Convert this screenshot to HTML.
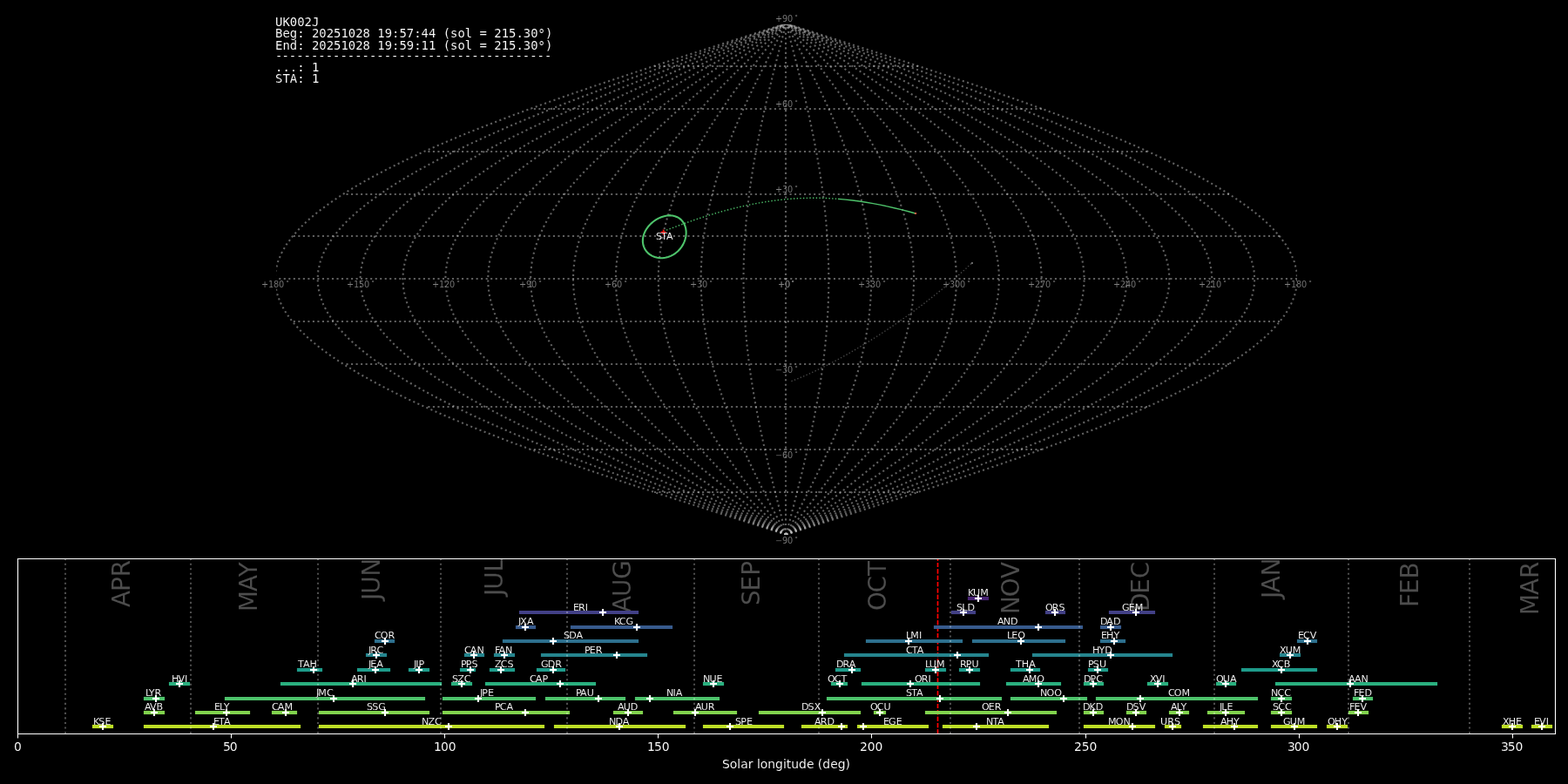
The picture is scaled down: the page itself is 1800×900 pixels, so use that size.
<!DOCTYPE html>
<html lang="en">
<head>
<meta charset="utf-8">
<title>UK002J shower association</title>
<style>
html,body{margin:0;padding:0;background:#000;overflow:hidden}
svg{display:block;position:absolute;left:0;top:0;will-change:transform;filter:opacity(1)}
text{fill:#fff;white-space:pre;font-kerning:none;stroke:#000;stroke-width:.1px}
.g{font:9.7222px "DejaVu Sans","Liberation Sans",sans-serif;fill:#808080}
.o{font-size:6.8056px;stroke:none}
.s{font:11.1111px "DejaVu Sans","Liberation Sans",sans-serif}
.t{font:13.8889px "DejaVu Sans","Liberation Sans",sans-serif}
.m{font:13.8889px "DejaVu Sans Mono","Liberation Mono",monospace}
.M{font:27.7778px "DejaVu Sans","Liberation Sans",sans-serif;fill-opacity:.3}
</style>
</head>
<body>
<svg width="1800" height="900" viewBox="0 0 1800 900">
<rect width="1800" height="900" fill="#000"/>
<defs>
<clipPath id="c1"><rect x="316" y="27" width="1173" height="587"/></clipPath>
<clipPath id="c2"><rect x="20" y="641" width="1765" height="201"/></clipPath>
</defs>
<path d="M413.5 614.5L413.5 619.5" fill="#000000" stroke="#000000" stroke-width="1.1111" stroke-linejoin="round"/>
<path d="M576.5 614.5L576.5 619.5" fill="#000000" stroke="#000000" stroke-width="1.1111" stroke-linejoin="round"/>
<path d="M739.5 614.5L739.5 619.5" fill="#000000" stroke="#000000" stroke-width="1.1111" stroke-linejoin="round"/>
<path d="M902.5 614.5L902.5 619.5" fill="#000000" stroke="#000000" stroke-width="1.1111" stroke-linejoin="round"/>
<path d="M1065.5 614.5L1065.5 619.5" fill="#000000" stroke="#000000" stroke-width="1.1111" stroke-linejoin="round"/>
<path d="M1228.5 614.5L1228.5 619.5" fill="#000000" stroke="#000000" stroke-width="1.1111" stroke-linejoin="round"/>
<path d="M1391.5 614.5L1391.5 619.5" fill="#000000" stroke="#000000" stroke-width="1.1111" stroke-linejoin="round"/>
<path d="M316.5 581.5L311.5 581.5" fill="#000000" stroke="#000000" stroke-width="1.1111" stroke-linejoin="round"/>
<path d="M316.5 516.5L311.5 516.5" fill="#000000" stroke="#000000" stroke-width="1.1111" stroke-linejoin="round"/>
<path d="M316.5 451.5L311.5 451.5" fill="#000000" stroke="#000000" stroke-width="1.1111" stroke-linejoin="round"/>
<path d="M316.5 386.5L311.5 386.5" fill="#000000" stroke="#000000" stroke-width="1.1111" stroke-linejoin="round"/>
<path d="M316.5 320.5L311.5 320.5" fill="#000000" stroke="#000000" stroke-width="1.1111" stroke-linejoin="round"/>
<path d="M316.5 255.5L311.5 255.5" fill="#000000" stroke="#000000" stroke-width="1.1111" stroke-linejoin="round"/>
<path d="M316.5 190.5L311.5 190.5" fill="#000000" stroke="#000000" stroke-width="1.1111" stroke-linejoin="round"/>
<path d="M316.5 125.5L311.5 125.5" fill="#000000" stroke="#000000" stroke-width="1.1111" stroke-linejoin="round"/>
<path d="M316.5 60.5L311.5 60.5" fill="#000000" stroke="#000000" stroke-width="1.1111" stroke-linejoin="round"/>
<path d="M902 614L902 604L902 594L902 584L902 575L902 565L902 555L902 545L902 535L902 526L902 516L902 506L902 496L902 487L902 477L902 467L902 457L902 447L902 438L902 428L902 418L902 408L902 399L902 389L902 379L902 369L902 359L902 350L902 340L902 330L902 320L902 311L902 301L902 291L902 281L902 271L902 262L902 252L902 242L902 232L902 223L902 213L902 203L902 193L902 183L902 174L902 164L902 154L902 144L902 135L902 125L902 115L902 105L902 95L902 86L902 76L902 66L902 56L902 47L902 37L902 27" fill="none" stroke="#c0c0c0" stroke-width="2.0833" stroke-opacity="0.5" stroke-dasharray="2.0833 3.4375" stroke-linejoin="round" clip-path="url(#c1)"/>
<path d="M902.42 613.68L899.861 603.902L897.309 594.123L894.771 584.345L892.255 574.567L889.765 564.788L887.311 555.01L884.898 545.232L882.533 535.453L880.223 525.675L877.973 515.897L875.791 506.118L873.681 496.34L871.65 486.562L869.704 476.783L867.847 467.005L866.085 457.227L864.423 447.448L862.864 437.67L861.415 427.892L860.077 418.113L858.856 408.335L857.754 398.557L856.774 388.778L855.92 379L855.193 369.222L854.595 359.443L854.129 349.665L853.795 339.887L853.594 330.108L853.527 320.33L853.594 310.552L853.795 300.773L854.129 290.995L854.595 281.217L855.193 271.438L855.92 261.66L856.774 251.882L857.754 242.103L858.856 232.325L860.077 222.547L861.415 212.768L862.864 202.99L864.423 193.212L866.085 183.433L867.847 173.655L869.704 163.877L871.65 154.098L873.681 144.32L875.791 134.542L877.973 124.763L880.223 114.985L882.533 105.207L884.898 95.428L887.311 85.65L889.765 75.872L892.255 66.093L894.771 56.315L897.309 46.537L899.861 36.758L902.42 26.98" fill="none" stroke="#c0c0c0" stroke-width="2.0833" stroke-opacity="0.5" stroke-dasharray="2.0833 3.4375" stroke-linejoin="round" clip-path="url(#c1)"/>
<path d="M902.42 613.68L897.302 603.902L892.199 594.123L887.123 584.345L882.089 574.567L877.111 564.788L872.202 555.01L867.376 545.232L862.647 535.453L858.026 525.675L853.527 515.897L849.162 506.118L844.942 496.34L840.881 486.562L836.988 476.783L833.274 467.005L829.75 457.227L826.425 447.448L823.309 437.67L820.409 427.892L817.734 418.113L815.291 408.335L813.087 398.557L811.128 388.778L809.419 379L807.965 369.222L806.77 359.443L805.837 349.665L805.169 339.887L804.767 330.108L804.633 320.33L804.767 310.552L805.169 300.773L805.837 290.995L806.77 281.217L807.965 271.438L809.419 261.66L811.128 251.882L813.087 242.103L815.291 232.325L817.734 222.547L820.409 212.768L823.309 202.99L826.425 193.212L829.75 183.433L833.274 173.655L836.988 163.877L840.881 154.098L844.942 144.32L849.162 134.542L853.527 124.763L858.026 114.985L862.647 105.207L867.376 95.428L872.202 85.65L877.111 75.872L882.089 66.093L887.123 56.315L892.199 46.537L897.302 36.758L902.42 26.98" fill="none" stroke="#c0c0c0" stroke-width="2.0833" stroke-opacity="0.5" stroke-dasharray="2.0833 3.4375" stroke-linejoin="round" clip-path="url(#c1)"/>
<path d="M902.42 613.68L894.743 603.902L887.088 594.123L879.474 584.345L871.924 574.567L864.456 564.788L857.093 555.01L849.855 545.232L842.76 535.453L835.829 525.675L829.08 515.897L822.532 506.118L816.204 496.34L810.111 486.562L804.272 476.783L798.702 467.005L793.416 457.227L788.428 447.448L783.753 437.67L779.404 427.892L775.391 418.113L771.727 408.335L768.421 398.557L765.482 388.778L762.919 379L760.738 369.222L758.945 359.443L757.546 349.665L756.544 339.887L755.941 330.108L755.74 320.33L755.941 310.552L756.544 300.773L757.546 290.995L758.945 281.217L760.738 271.438L762.919 261.66L765.482 251.882L768.421 242.103L771.727 232.325L775.391 222.547L779.404 212.768L783.753 202.99L788.428 193.212L793.416 183.433L798.702 173.655L804.272 163.877L810.111 154.098L816.204 144.32L822.532 134.542L829.08 124.763L835.829 114.985L842.76 105.207L849.855 95.428L857.093 85.65L864.456 75.872L871.924 66.093L879.474 56.315L887.088 46.537L894.743 36.758L902.42 26.98" fill="none" stroke="#c0c0c0" stroke-width="2.0833" stroke-opacity="0.5" stroke-dasharray="2.0833 3.4375" stroke-linejoin="round" clip-path="url(#c1)"/>
<path d="M902.42 613.68L892.184 603.902L881.977 594.123L871.826 584.345L861.758 574.567L851.802 564.788L841.985 555.01L832.333 545.232L822.873 535.453L813.632 525.675L804.633 515.897L795.903 506.118L787.465 496.34L779.342 486.562L771.556 476.783L764.129 467.005L757.081 457.227L750.431 447.448L744.198 437.67L738.398 427.892L733.049 418.113L728.163 408.335L723.755 398.557L719.837 388.778L716.419 379L713.511 369.222L711.12 359.443L709.254 349.665L707.918 339.887L707.115 330.108L706.847 320.33L707.115 310.552L707.918 300.773L709.254 290.995L711.12 281.217L713.511 271.438L716.419 261.66L719.837 251.882L723.755 242.103L728.163 232.325L733.049 222.547L738.398 212.768L744.198 202.99L750.431 193.212L757.081 183.433L764.129 173.655L771.556 163.877L779.342 154.098L787.465 144.32L795.903 134.542L804.633 124.763L813.632 114.985L822.873 105.207L832.333 95.428L841.985 85.65L851.802 75.872L861.758 66.093L871.826 56.315L881.977 46.537L892.184 36.758L902.42 26.98" fill="none" stroke="#c0c0c0" stroke-width="2.0833" stroke-opacity="0.5" stroke-dasharray="2.0833 3.4375" stroke-linejoin="round" clip-path="url(#c1)"/>
<path d="M902.42 613.68L889.626 603.902L876.866 594.123L864.177 584.345L851.593 574.567L839.147 564.788L826.876 555.01L814.811 545.232L802.986 535.453L791.434 525.675L780.187 515.897L769.274 506.118L758.726 496.34L748.572 486.562L738.84 476.783L729.556 467.005L720.746 457.227L712.434 447.448L704.642 437.67L697.393 427.892L690.706 418.113L684.599 408.335L679.089 398.557L674.191 388.778L669.918 379L666.283 369.222L663.296 359.443L660.963 349.665L659.293 339.887L658.288 330.108L657.953 320.33L658.288 310.552L659.293 300.773L660.963 290.995L663.296 281.217L666.283 271.438L669.918 261.66L674.191 251.882L679.089 242.103L684.599 232.325L690.706 222.547L697.393 212.768L704.642 202.99L712.434 193.212L720.746 183.433L729.556 173.655L738.84 163.877L748.572 154.098L758.726 144.32L769.274 134.542L780.187 124.763L791.434 114.985L802.986 105.207L814.811 95.428L826.876 85.65L839.147 75.872L851.593 66.093L864.177 56.315L876.866 46.537L889.626 36.758L902.42 26.98" fill="none" stroke="#c0c0c0" stroke-width="2.0833" stroke-opacity="0.5" stroke-dasharray="2.0833 3.4375" stroke-linejoin="round" clip-path="url(#c1)"/>
<path d="M902.42 613.68L887.067 603.902L871.756 594.123L856.528 584.345L841.427 574.567L826.493 564.788L811.767 555.01L797.289 545.232L783.1 535.453L769.237 525.675L755.74 515.897L742.645 506.118L729.987 496.34L717.803 486.562L706.124 476.783L694.983 467.005L684.411 457.227L674.436 447.448L665.087 437.67L656.388 427.892L648.363 418.113L641.034 408.335L634.422 398.557L628.545 388.778L623.418 379L619.056 369.222L615.471 359.443L612.672 349.665L610.667 339.887L609.462 330.108L609.06 320.33L609.462 310.552L610.667 300.773L612.672 290.995L615.471 281.217L619.056 271.438L623.418 261.66L628.545 251.882L634.422 242.103L641.034 232.325L648.363 222.547L656.388 212.768L665.087 202.99L674.436 193.212L684.411 183.433L694.983 173.655L706.124 163.877L717.803 154.098L729.987 144.32L742.645 134.542L755.74 124.763L769.237 114.985L783.1 105.207L797.289 95.428L811.767 85.65L826.493 75.872L841.427 66.093L856.528 56.315L871.756 46.537L887.067 36.758L902.42 26.98" fill="none" stroke="#c0c0c0" stroke-width="2.0833" stroke-opacity="0.5" stroke-dasharray="2.0833 3.4375" stroke-linejoin="round" clip-path="url(#c1)"/>
<path d="M902.42 613.68L884.508 603.902L866.645 594.123L848.88 584.345L831.262 574.567L813.838 564.788L796.658 555.01L779.767 545.232L763.213 535.453L747.04 525.675L731.293 515.897L716.015 506.118L701.249 496.34L687.033 486.562L673.408 476.783L660.41 467.005L648.076 457.227L636.439 447.448L625.531 437.67L615.382 427.892L606.02 418.113L597.47 408.335L589.756 398.557L582.899 388.778L576.918 379L571.829 369.222L567.646 359.443L564.38 349.665L562.042 339.887L560.636 330.108L560.167 320.33L560.636 310.552L562.042 300.773L564.38 290.995L567.646 281.217L571.829 271.438L576.918 261.66L582.899 251.882L589.756 242.103L597.47 232.325L606.02 222.547L615.382 212.768L625.531 202.99L636.439 193.212L648.076 183.433L660.41 173.655L673.408 163.877L687.033 154.098L701.249 144.32L716.015 134.542L731.293 124.763L747.04 114.985L763.213 105.207L779.767 95.428L796.658 85.65L813.838 75.872L831.262 66.093L848.88 56.315L866.645 46.537L884.508 36.758L902.42 26.98" fill="none" stroke="#c0c0c0" stroke-width="2.0833" stroke-opacity="0.5" stroke-dasharray="2.0833 3.4375" stroke-linejoin="round" clip-path="url(#c1)"/>
<path d="M902.42 613.68L881.949 603.902L861.534 594.123L841.231 584.345L821.096 574.567L801.184 564.788L781.549 555.01L762.246 545.232L743.326 535.453L724.843 525.675L706.847 515.897L689.386 506.118L672.51 496.34L656.263 486.562L640.692 476.783L625.838 467.005L611.741 457.227L598.442 447.448L585.976 437.67L574.377 427.892L563.677 418.113L553.906 408.335L545.09 398.557L537.253 388.778L530.417 379L524.601 369.222L519.821 359.443L516.089 349.665L513.416 339.887L511.809 330.108L511.273 320.33L511.809 310.552L513.416 300.773L516.089 290.995L519.821 281.217L524.601 271.438L530.417 261.66L537.253 251.882L545.09 242.103L553.906 232.325L563.677 222.547L574.377 212.768L585.976 202.99L598.442 193.212L611.741 183.433L625.838 173.655L640.692 163.877L656.263 154.098L672.51 144.32L689.386 134.542L706.847 124.763L724.843 114.985L743.326 105.207L762.246 95.428L781.549 85.65L801.184 75.872L821.096 66.093L841.231 56.315L861.534 46.537L881.949 36.758L902.42 26.98" fill="none" stroke="#c0c0c0" stroke-width="2.0833" stroke-opacity="0.5" stroke-dasharray="2.0833 3.4375" stroke-linejoin="round" clip-path="url(#c1)"/>
<path d="M902.42 613.68L879.39 603.902L856.423 594.123L833.583 584.345L810.931 574.567L788.529 564.788L766.44 555.01L744.724 545.232L723.44 535.453L702.646 525.675L682.4 515.897L662.757 506.118L643.771 496.34L625.494 486.562L607.976 476.783L591.265 467.005L575.407 457.227L560.445 447.448L546.42 437.67L533.371 427.892L521.334 418.113L510.341 408.335L500.423 398.557L491.607 388.778L483.917 379L477.374 369.222L471.996 359.443L467.798 349.665L464.791 339.887L462.983 330.108L462.38 320.33L462.983 310.552L464.791 300.773L467.798 290.995L471.996 281.217L477.374 271.438L483.917 261.66L491.607 251.882L500.423 242.103L510.341 232.325L521.334 222.547L533.371 212.768L546.42 202.99L560.445 193.212L575.407 183.433L591.265 173.655L607.976 163.877L625.494 154.098L643.771 144.32L662.757 134.542L682.4 124.763L702.646 114.985L723.44 105.207L744.724 95.428L766.44 85.65L788.529 75.872L810.931 66.093L833.583 56.315L856.423 46.537L879.39 36.758L902.42 26.98" fill="none" stroke="#c0c0c0" stroke-width="2.0833" stroke-opacity="0.5" stroke-dasharray="2.0833 3.4375" stroke-linejoin="round" clip-path="url(#c1)"/>
<path d="M902.42 613.68L876.831 603.902L851.313 594.123L825.934 584.345L800.765 574.567L775.875 564.788L751.331 555.01L727.202 545.232L703.553 535.453L680.449 525.675L657.953 515.897L636.128 506.118L615.032 496.34L594.724 486.562L575.26 476.783L556.692 467.005L539.072 457.227L522.447 447.448L506.865 437.67L492.366 427.892L478.991 418.113L466.777 408.335L455.757 398.557L445.961 388.778L437.417 379L430.147 369.222L424.171 359.443L419.506 349.665L416.165 339.887L414.157 330.108L413.487 320.33L414.157 310.552L416.165 300.773L419.506 290.995L424.171 281.217L430.147 271.438L437.417 261.66L445.961 251.882L455.757 242.103L466.777 232.325L478.991 222.547L492.366 212.768L506.865 202.99L522.447 193.212L539.072 183.433L556.692 173.655L575.26 163.877L594.724 154.098L615.032 144.32L636.128 134.542L657.953 124.763L680.449 114.985L703.553 105.207L727.202 95.428L751.331 85.65L775.875 75.872L800.765 66.093L825.934 56.315L851.313 46.537L876.831 36.758L902.42 26.98" fill="none" stroke="#c0c0c0" stroke-width="2.0833" stroke-opacity="0.5" stroke-dasharray="2.0833 3.4375" stroke-linejoin="round" clip-path="url(#c1)"/>
<path d="M902.42 613.68L874.272 603.902L846.202 594.123L818.285 584.345L790.6 574.567L763.22 564.788L736.222 555.01L709.68 545.232L683.666 535.453L658.252 525.675L633.507 515.897L609.499 506.118L586.293 496.34L563.955 486.562L542.544 476.783L522.119 467.005L502.737 457.227L484.45 447.448L467.309 437.67L451.361 427.892L436.648 418.113L423.213 408.335L411.091 398.557L400.316 388.778L390.916 379L382.919 369.222L376.346 359.443L371.215 349.665L367.54 339.887L365.33 330.108L364.593 320.33L365.33 310.552L367.54 300.773L371.215 290.995L376.346 281.217L382.919 271.438L390.916 261.66L400.316 251.882L411.091 242.103L423.213 232.325L436.648 222.547L451.361 212.768L467.309 202.99L484.45 193.212L502.737 183.433L522.119 173.655L542.544 163.877L563.955 154.098L586.293 144.32L609.499 134.542L633.507 124.763L658.252 114.985L683.666 105.207L709.68 95.428L736.222 85.65L763.22 75.872L790.6 66.093L818.285 56.315L846.202 46.537L874.272 36.758L902.42 26.98" fill="none" stroke="#c0c0c0" stroke-width="2.0833" stroke-opacity="0.5" stroke-dasharray="2.0833 3.4375" stroke-linejoin="round" clip-path="url(#c1)"/>
<path d="M902.42 613.68L871.713 603.902L841.091 594.123L810.637 584.345L780.434 574.567L750.566 564.788L721.114 555.01L692.158 545.232L663.779 535.453L636.055 525.675L609.06 515.897L582.869 506.118L557.555 496.34L533.185 486.562L509.828 476.783L487.546 467.005L466.402 457.227L446.453 447.448L427.754 437.67L410.355 427.892L394.306 418.113L379.649 408.335L366.425 398.557L354.67 388.778L344.416 379L335.692 369.222L328.521 359.443L322.923 349.665L318.914 339.887L316.504 330.108L315.7 320.33L316.504 310.552L318.914 300.773L322.923 290.995L328.521 281.217L335.692 271.438L344.416 261.66L354.67 251.882L366.425 242.103L379.649 232.325L394.306 222.547L410.355 212.768L427.754 202.99L446.453 193.212L466.402 183.433L487.546 173.655L509.828 163.877L533.185 154.098L557.555 144.32L582.869 134.542L609.06 124.763L636.055 114.985L663.779 105.207L692.158 95.428L721.114 85.65L750.566 75.872L780.434 66.093L810.637 56.315L841.091 46.537L871.713 36.758L902.42 26.98" fill="none" stroke="#c0c0c0" stroke-width="2.0833" stroke-opacity="0.5" stroke-dasharray="2.0833 3.4375" stroke-linejoin="round" clip-path="url(#c1)"/>
<path d="M902.42 613.68L933.127 603.902L963.749 594.123L994.203 584.345L1024.406 574.567L1054.274 564.788L1083.726 555.01L1112.682 545.232L1141.06 535.453L1168.785 525.675L1195.78 515.897L1221.97 506.118L1247.285 496.34L1271.655 486.562L1295.012 476.783L1317.293 467.005L1338.438 457.227L1358.387 447.448L1377.086 437.67L1394.485 427.892L1410.534 418.113L1425.191 408.335L1438.415 398.557L1450.17 388.778L1460.424 379L1469.148 369.222L1476.318 359.443L1481.916 349.665L1485.926 339.887L1488.336 330.108L1489.14 320.33L1488.336 310.552L1485.926 300.773L1481.916 290.995L1476.318 281.217L1469.148 271.438L1460.424 261.66L1450.17 251.882L1438.415 242.103L1425.191 232.325L1410.534 222.547L1394.485 212.768L1377.086 202.99L1358.387 193.212L1338.438 183.433L1317.293 173.655L1295.012 163.877L1271.655 154.098L1247.285 144.32L1221.97 134.542L1195.78 124.763L1168.785 114.985L1141.06 105.207L1112.682 95.428L1083.726 85.65L1054.274 75.872L1024.406 66.093L994.203 56.315L963.749 46.537L933.127 36.758L902.42 26.98" fill="none" stroke="#c0c0c0" stroke-width="2.0833" stroke-opacity="0.5" stroke-dasharray="2.0833 3.4375" stroke-linejoin="round" clip-path="url(#c1)"/>
<path d="M902.42 613.68L930.568 603.902L958.638 594.123L986.555 584.345L1014.24 574.567L1041.62 564.788L1068.618 555.01L1095.16 545.232L1121.174 535.453L1146.588 525.675L1171.333 515.897L1195.341 506.118L1218.547 496.34L1240.885 486.562L1262.296 476.783L1282.721 467.005L1302.103 457.227L1320.39 447.448L1337.531 437.67L1353.479 427.892L1368.192 418.113L1381.627 408.335L1393.749 398.557L1404.524 388.778L1413.924 379L1421.921 369.222L1428.494 359.443L1433.625 349.665L1437.3 339.887L1439.51 330.108L1440.247 320.33L1439.51 310.552L1437.3 300.773L1433.625 290.995L1428.494 281.217L1421.921 271.438L1413.924 261.66L1404.524 251.882L1393.749 242.103L1381.627 232.325L1368.192 222.547L1353.479 212.768L1337.531 202.99L1320.39 193.212L1302.103 183.433L1282.721 173.655L1262.296 163.877L1240.885 154.098L1218.547 144.32L1195.341 134.542L1171.333 124.763L1146.588 114.985L1121.174 105.207L1095.16 95.428L1068.618 85.65L1041.62 75.872L1014.24 66.093L986.555 56.315L958.638 46.537L930.568 36.758L902.42 26.98" fill="none" stroke="#c0c0c0" stroke-width="2.0833" stroke-opacity="0.5" stroke-dasharray="2.0833 3.4375" stroke-linejoin="round" clip-path="url(#c1)"/>
<path d="M902.42 613.68L928.009 603.902L953.527 594.123L978.906 584.345L1004.075 574.567L1028.965 564.788L1053.509 555.01L1077.638 545.232L1101.287 535.453L1124.391 525.675L1146.887 515.897L1168.712 506.118L1189.808 496.34L1210.116 486.562L1229.58 476.783L1248.148 467.005L1265.768 457.227L1282.393 447.448L1297.975 437.67L1312.474 427.892L1325.849 418.113L1338.063 408.335L1349.083 398.557L1358.879 388.778L1367.423 379L1374.693 369.222L1380.669 359.443L1385.334 349.665L1388.675 339.887L1390.683 330.108L1391.353 320.33L1390.683 310.552L1388.675 300.773L1385.334 290.995L1380.669 281.217L1374.693 271.438L1367.423 261.66L1358.879 251.882L1349.083 242.103L1338.063 232.325L1325.849 222.547L1312.474 212.768L1297.975 202.99L1282.393 193.212L1265.768 183.433L1248.148 173.655L1229.58 163.877L1210.116 154.098L1189.808 144.32L1168.712 134.542L1146.887 124.763L1124.391 114.985L1101.287 105.207L1077.638 95.428L1053.509 85.65L1028.965 75.872L1004.075 66.093L978.906 56.315L953.527 46.537L928.009 36.758L902.42 26.98" fill="none" stroke="#c0c0c0" stroke-width="2.0833" stroke-opacity="0.5" stroke-dasharray="2.0833 3.4375" stroke-linejoin="round" clip-path="url(#c1)"/>
<path d="M902.42 613.68L925.45 603.902L948.417 594.123L971.257 584.345L993.909 574.567L1016.311 564.788L1038.4 555.01L1060.116 545.232L1081.4 535.453L1102.194 525.675L1122.44 515.897L1142.083 506.118L1161.069 496.34L1179.346 486.562L1196.864 476.783L1213.575 467.005L1229.433 457.227L1244.395 447.448L1258.42 437.67L1271.469 427.892L1283.506 418.113L1294.499 408.335L1304.417 398.557L1313.233 388.778L1320.923 379L1327.466 369.222L1332.844 359.443L1337.042 349.665L1340.049 339.887L1341.857 330.108L1342.46 320.33L1341.857 310.552L1340.049 300.773L1337.042 290.995L1332.844 281.217L1327.466 271.438L1320.923 261.66L1313.233 251.882L1304.417 242.103L1294.499 232.325L1283.506 222.547L1271.469 212.768L1258.42 202.99L1244.395 193.212L1229.433 183.433L1213.575 173.655L1196.864 163.877L1179.346 154.098L1161.069 144.32L1142.083 134.542L1122.44 124.763L1102.194 114.985L1081.4 105.207L1060.116 95.428L1038.4 85.65L1016.311 75.872L993.909 66.093L971.257 56.315L948.417 46.537L925.45 36.758L902.42 26.98" fill="none" stroke="#c0c0c0" stroke-width="2.0833" stroke-opacity="0.5" stroke-dasharray="2.0833 3.4375" stroke-linejoin="round" clip-path="url(#c1)"/>
<path d="M902.42 613.68L922.891 603.902L943.306 594.123L963.609 584.345L983.744 574.567L1003.656 564.788L1023.291 555.01L1042.594 545.232L1061.514 535.453L1079.997 525.675L1097.993 515.897L1115.454 506.118L1132.33 496.34L1148.577 486.562L1164.148 476.783L1179.002 467.005L1193.099 457.227L1206.398 447.448L1218.864 437.67L1230.463 427.892L1241.163 418.113L1250.934 408.335L1259.75 398.557L1267.587 388.778L1274.423 379L1280.239 369.222L1285.019 359.443L1288.751 349.665L1291.424 339.887L1293.031 330.108L1293.567 320.33L1293.031 310.552L1291.424 300.773L1288.751 290.995L1285.019 281.217L1280.239 271.438L1274.423 261.66L1267.587 251.882L1259.75 242.103L1250.934 232.325L1241.163 222.547L1230.463 212.768L1218.864 202.99L1206.398 193.212L1193.099 183.433L1179.002 173.655L1164.148 163.877L1148.577 154.098L1132.33 144.32L1115.454 134.542L1097.993 124.763L1079.997 114.985L1061.514 105.207L1042.594 95.428L1023.291 85.65L1003.656 75.872L983.744 66.093L963.609 56.315L943.306 46.537L922.891 36.758L902.42 26.98" fill="none" stroke="#c0c0c0" stroke-width="2.0833" stroke-opacity="0.5" stroke-dasharray="2.0833 3.4375" stroke-linejoin="round" clip-path="url(#c1)"/>
<path d="M902.42 613.68L920.332 603.902L938.195 594.123L955.96 584.345L973.578 574.567L991.002 564.788L1008.182 555.01L1025.073 545.232L1041.627 535.453L1057.8 525.675L1073.547 515.897L1088.825 506.118L1103.591 496.34L1117.807 486.562L1131.432 476.783L1144.43 467.005L1156.764 457.227L1168.401 447.448L1179.309 437.67L1189.458 427.892L1198.82 418.113L1207.37 408.335L1215.084 398.557L1221.941 388.778L1227.922 379L1233.011 369.222L1237.194 359.443L1240.46 349.665L1242.798 339.887L1244.204 330.108L1244.673 320.33L1244.204 310.552L1242.798 300.773L1240.46 290.995L1237.194 281.217L1233.011 271.438L1227.922 261.66L1221.941 251.882L1215.084 242.103L1207.37 232.325L1198.82 222.547L1189.458 212.768L1179.309 202.99L1168.401 193.212L1156.764 183.433L1144.43 173.655L1131.432 163.877L1117.807 154.098L1103.591 144.32L1088.825 134.542L1073.547 124.763L1057.8 114.985L1041.627 105.207L1025.073 95.428L1008.182 85.65L991.002 75.872L973.578 66.093L955.96 56.315L938.195 46.537L920.332 36.758L902.42 26.98" fill="none" stroke="#c0c0c0" stroke-width="2.0833" stroke-opacity="0.5" stroke-dasharray="2.0833 3.4375" stroke-linejoin="round" clip-path="url(#c1)"/>
<path d="M902.42 613.68L917.773 603.902L933.084 594.123L948.312 584.345L963.413 574.567L978.347 564.788L993.073 555.01L1007.551 545.232L1021.74 535.453L1035.603 525.675L1049.1 515.897L1062.195 506.118L1074.853 496.34L1087.037 486.562L1098.716 476.783L1109.857 467.005L1120.429 457.227L1130.404 447.448L1139.753 437.67L1148.452 427.892L1156.477 418.113L1163.806 408.335L1170.418 398.557L1176.295 388.778L1181.422 379L1185.784 369.222L1189.369 359.443L1192.168 349.665L1194.173 339.887L1195.378 330.108L1195.78 320.33L1195.378 310.552L1194.173 300.773L1192.168 290.995L1189.369 281.217L1185.784 271.438L1181.422 261.66L1176.295 251.882L1170.418 242.103L1163.806 232.325L1156.477 222.547L1148.452 212.768L1139.753 202.99L1130.404 193.212L1120.429 183.433L1109.857 173.655L1098.716 163.877L1087.037 154.098L1074.853 144.32L1062.195 134.542L1049.1 124.763L1035.603 114.985L1021.74 105.207L1007.551 95.428L993.073 85.65L978.347 75.872L963.413 66.093L948.312 56.315L933.084 46.537L917.773 36.758L902.42 26.98" fill="none" stroke="#c0c0c0" stroke-width="2.0833" stroke-opacity="0.5" stroke-dasharray="2.0833 3.4375" stroke-linejoin="round" clip-path="url(#c1)"/>
<path d="M902.42 613.68L915.214 603.902L927.974 594.123L940.663 584.345L953.247 574.567L965.693 564.788L977.964 555.01L990.029 545.232L1001.854 535.453L1013.406 525.675L1024.653 515.897L1035.566 506.118L1046.114 496.34L1056.268 486.562L1066 476.783L1075.284 467.005L1084.094 457.227L1092.406 447.448L1100.198 437.67L1107.447 427.892L1114.134 418.113L1120.241 408.335L1125.751 398.557L1130.649 388.778L1134.922 379L1138.557 369.222L1141.544 359.443L1143.877 349.665L1145.547 339.887L1146.552 330.108L1146.887 320.33L1146.552 310.552L1145.547 300.773L1143.877 290.995L1141.544 281.217L1138.557 271.438L1134.922 261.66L1130.649 251.882L1125.751 242.103L1120.241 232.325L1114.134 222.547L1107.447 212.768L1100.198 202.99L1092.406 193.212L1084.094 183.433L1075.284 173.655L1066 163.877L1056.268 154.098L1046.114 144.32L1035.566 134.542L1024.653 124.763L1013.406 114.985L1001.854 105.207L990.029 95.428L977.964 85.65L965.693 75.872L953.247 66.093L940.663 56.315L927.974 46.537L915.214 36.758L902.42 26.98" fill="none" stroke="#c0c0c0" stroke-width="2.0833" stroke-opacity="0.5" stroke-dasharray="2.0833 3.4375" stroke-linejoin="round" clip-path="url(#c1)"/>
<path d="M902.42 613.68L912.656 603.902L922.863 594.123L933.014 584.345L943.082 574.567L953.038 564.788L962.855 555.01L972.507 545.232L981.967 535.453L991.208 525.675L1000.207 515.897L1008.937 506.118L1017.375 496.34L1025.498 486.562L1033.284 476.783L1040.711 467.005L1047.759 457.227L1054.409 447.448L1060.642 437.67L1066.442 427.892L1071.791 418.113L1076.677 408.335L1081.085 398.557L1085.003 388.778L1088.421 379L1091.329 369.222L1093.72 359.443L1095.586 349.665L1096.922 339.887L1097.725 330.108L1097.993 320.33L1097.725 310.552L1096.922 300.773L1095.586 290.995L1093.72 281.217L1091.329 271.438L1088.421 261.66L1085.003 251.882L1081.085 242.103L1076.677 232.325L1071.791 222.547L1066.442 212.768L1060.642 202.99L1054.409 193.212L1047.759 183.433L1040.711 173.655L1033.284 163.877L1025.498 154.098L1017.375 144.32L1008.937 134.542L1000.207 124.763L991.208 114.985L981.967 105.207L972.507 95.428L962.855 85.65L953.038 75.872L943.082 66.093L933.014 56.315L922.863 46.537L912.656 36.758L902.42 26.98" fill="none" stroke="#c0c0c0" stroke-width="2.0833" stroke-opacity="0.5" stroke-dasharray="2.0833 3.4375" stroke-linejoin="round" clip-path="url(#c1)"/>
<path d="M902.42 613.68L910.097 603.902L917.752 594.123L925.366 584.345L932.916 574.567L940.384 564.788L947.747 555.01L954.985 545.232L962.08 535.453L969.011 525.675L975.76 515.897L982.308 506.118L988.636 496.34L994.729 486.562L1000.568 476.783L1006.138 467.005L1011.424 457.227L1016.412 447.448L1021.087 437.67L1025.436 427.892L1029.449 418.113L1033.113 408.335L1036.419 398.557L1039.358 388.778L1041.921 379L1044.102 369.222L1045.895 359.443L1047.294 349.665L1048.296 339.887L1048.899 330.108L1049.1 320.33L1048.899 310.552L1048.296 300.773L1047.294 290.995L1045.895 281.217L1044.102 271.438L1041.921 261.66L1039.358 251.882L1036.419 242.103L1033.113 232.325L1029.449 222.547L1025.436 212.768L1021.087 202.99L1016.412 193.212L1011.424 183.433L1006.138 173.655L1000.568 163.877L994.729 154.098L988.636 144.32L982.308 134.542L975.76 124.763L969.011 114.985L962.08 105.207L954.985 95.428L947.747 85.65L940.384 75.872L932.916 66.093L925.366 56.315L917.752 46.537L910.097 36.758L902.42 26.98" fill="none" stroke="#c0c0c0" stroke-width="2.0833" stroke-opacity="0.5" stroke-dasharray="2.0833 3.4375" stroke-linejoin="round" clip-path="url(#c1)"/>
<path d="M902.42 613.68L907.538 603.902L912.641 594.123L917.717 584.345L922.751 574.567L927.729 564.788L932.638 555.01L937.464 545.232L942.193 535.453L946.814 525.675L951.313 515.897L955.678 506.118L959.898 496.34L963.959 486.562L967.852 476.783L971.566 467.005L975.09 457.227L978.415 447.448L981.531 437.67L984.431 427.892L987.106 418.113L989.549 408.335L991.753 398.557L993.712 388.778L995.421 379L996.875 369.222L998.07 359.443L999.003 349.665L999.671 339.887L1000.073 330.108L1000.207 320.33L1000.073 310.552L999.671 300.773L999.003 290.995L998.07 281.217L996.875 271.438L995.421 261.66L993.712 251.882L991.753 242.103L989.549 232.325L987.106 222.547L984.431 212.768L981.531 202.99L978.415 193.212L975.09 183.433L971.566 173.655L967.852 163.877L963.959 154.098L959.898 144.32L955.678 134.542L951.313 124.763L946.814 114.985L942.193 105.207L937.464 95.428L932.638 85.65L927.729 75.872L922.751 66.093L917.717 56.315L912.641 46.537L907.538 36.758L902.42 26.98" fill="none" stroke="#c0c0c0" stroke-width="2.0833" stroke-opacity="0.5" stroke-dasharray="2.0833 3.4375" stroke-linejoin="round" clip-path="url(#c1)"/>
<path d="M902.42 613.68L904.979 603.902L907.531 594.123L910.069 584.345L912.585 574.567L915.075 564.788L917.529 555.01L919.942 545.232L922.307 535.453L924.617 525.675L926.867 515.897L929.049 506.118L931.159 496.34L933.19 486.562L935.136 476.783L936.993 467.005L938.755 457.227L940.417 447.448L941.976 437.67L943.425 427.892L944.763 418.113L945.984 408.335L947.086 398.557L948.066 388.778L948.92 379L949.647 369.222L950.245 359.443L950.711 349.665L951.045 339.887L951.246 330.108L951.313 320.33L951.246 310.552L951.045 300.773L950.711 290.995L950.245 281.217L949.647 271.438L948.92 261.66L948.066 251.882L947.086 242.103L945.984 232.325L944.763 222.547L943.425 212.768L941.976 202.99L940.417 193.212L938.755 183.433L936.993 173.655L935.136 163.877L933.19 154.098L931.159 144.32L929.049 134.542L926.867 124.763L924.617 114.985L922.307 105.207L919.942 95.428L917.529 85.65L915.075 75.872L912.585 66.093L910.069 56.315L907.531 46.537L904.979 36.758L902.42 26.98" fill="none" stroke="#c0c0c0" stroke-width="2.0833" stroke-opacity="0.5" stroke-dasharray="2.0833 3.4375" stroke-linejoin="round" clip-path="url(#c1)"/>
<path d="M902 565L890 565L877 565L864 565L852 565L839 565L826 565L814 565L801 565L789 565L776 565L763 565L751 565" fill="none" stroke="#c0c0c0" stroke-width="2.0833" stroke-opacity="0.5" stroke-dasharray="2.0833 3.4375" stroke-linejoin="round" clip-path="url(#c1)"/>
<path d="M1054 565L1042 565L1029 565L1016 565L1004 565L991 565L978 565L966 565L953 565L940 565L928 565L915 565L902 565" fill="none" stroke="#c0c0c0" stroke-width="2.0833" stroke-opacity="0.5" stroke-dasharray="2.0833 3.4375" stroke-linejoin="round" clip-path="url(#c1)"/>
<path d="M902 516L878 516L854 516L829 516L805 516L780 516L756 516L731 516L707 516L682 516L658 516L634 516L609 516" fill="none" stroke="#c0c0c0" stroke-width="2.0833" stroke-opacity="0.5" stroke-dasharray="2.0833 3.4375" stroke-linejoin="round" clip-path="url(#c1)"/>
<path d="M1196 516L1171 516L1147 516L1122 516L1098 516L1074 516L1049 516L1025 516L1000 516L976 516L951 516L927 516L902 516" fill="none" stroke="#c0c0c0" stroke-width="2.0833" stroke-opacity="0.5" stroke-dasharray="2.0833 3.4375" stroke-linejoin="round" clip-path="url(#c1)"/>
<path d="M902 467L868 467L833 467L799 467L764 467L730 467L695 467L660 467L626 467L591 467L557 467L522 467L488 467" fill="none" stroke="#c0c0c0" stroke-width="2.0833" stroke-opacity="0.5" stroke-dasharray="2.0833 3.4375" stroke-linejoin="round" clip-path="url(#c1)"/>
<path d="M1317 467L1283 467L1248 467L1214 467L1179 467L1144 467L1110 467L1075 467L1041 467L1006 467L972 467L937 467L902 467" fill="none" stroke="#c0c0c0" stroke-width="2.0833" stroke-opacity="0.5" stroke-dasharray="2.0833 3.4375" stroke-linejoin="round" clip-path="url(#c1)"/>
<path d="M902 418L860 418L818 418L775 418L733 418L691 418L648 418L606 418L564 418L521 418L479 418L437 418L394 418" fill="none" stroke="#c0c0c0" stroke-width="2.0833" stroke-opacity="0.5" stroke-dasharray="2.0833 3.4375" stroke-linejoin="round" clip-path="url(#c1)"/>
<path d="M1411 418L1368 418L1326 418L1284 418L1241 418L1199 418L1156 418L1114 418L1072 418L1029 418L987 418L945 418L902 418" fill="none" stroke="#c0c0c0" stroke-width="2.0833" stroke-opacity="0.5" stroke-dasharray="2.0833 3.4375" stroke-linejoin="round" clip-path="url(#c1)"/>
<path d="M902 369L855 369L808 369L761 369L714 369L666 369L619 369L572 369L525 369L477 369L430 369L383 369L336 369" fill="none" stroke="#c0c0c0" stroke-width="2.0833" stroke-opacity="0.5" stroke-dasharray="2.0833 3.4375" stroke-linejoin="round" clip-path="url(#c1)"/>
<path d="M1469 369L1422 369L1375 369L1327 369L1280 369L1233 369L1186 369L1139 369L1091 369L1044 369L997 369L950 369L902 369" fill="none" stroke="#c0c0c0" stroke-width="2.0833" stroke-opacity="0.5" stroke-dasharray="2.0833 3.4375" stroke-linejoin="round" clip-path="url(#c1)"/>
<path d="M902 320L854 320L805 320L756 320L707 320L658 320L609 320L560 320L511 320L462 320L413 320L365 320L316 320" fill="none" stroke="#c0c0c0" stroke-width="2.0833" stroke-opacity="0.5" stroke-dasharray="2.0833 3.4375" stroke-linejoin="round" clip-path="url(#c1)"/>
<path d="M1489 320L1440 320L1391 320L1342 320L1294 320L1245 320L1196 320L1147 320L1098 320L1049 320L1000 320L951 320L902 320" fill="none" stroke="#c0c0c0" stroke-width="2.0833" stroke-opacity="0.5" stroke-dasharray="2.0833 3.4375" stroke-linejoin="round" clip-path="url(#c1)"/>
<path d="M902 271L855 271L808 271L761 271L714 271L666 271L619 271L572 271L525 271L477 271L430 271L383 271L336 271" fill="none" stroke="#c0c0c0" stroke-width="2.0833" stroke-opacity="0.5" stroke-dasharray="2.0833 3.4375" stroke-linejoin="round" clip-path="url(#c1)"/>
<path d="M1469 271L1422 271L1375 271L1327 271L1280 271L1233 271L1186 271L1139 271L1091 271L1044 271L997 271L950 271L902 271" fill="none" stroke="#c0c0c0" stroke-width="2.0833" stroke-opacity="0.5" stroke-dasharray="2.0833 3.4375" stroke-linejoin="round" clip-path="url(#c1)"/>
<path d="M902 223L860 223L818 223L775 223L733 223L691 223L648 223L606 223L564 223L521 223L479 223L437 223L394 223" fill="none" stroke="#c0c0c0" stroke-width="2.0833" stroke-opacity="0.5" stroke-dasharray="2.0833 3.4375" stroke-linejoin="round" clip-path="url(#c1)"/>
<path d="M1411 223L1368 223L1326 223L1284 223L1241 223L1199 223L1156 223L1114 223L1072 223L1029 223L987 223L945 223L902 223" fill="none" stroke="#c0c0c0" stroke-width="2.0833" stroke-opacity="0.5" stroke-dasharray="2.0833 3.4375" stroke-linejoin="round" clip-path="url(#c1)"/>
<path d="M902 174L868 174L833 174L799 174L764 174L730 174L695 174L660 174L626 174L591 174L557 174L522 174L488 174" fill="none" stroke="#c0c0c0" stroke-width="2.0833" stroke-opacity="0.5" stroke-dasharray="2.0833 3.4375" stroke-linejoin="round" clip-path="url(#c1)"/>
<path d="M1317 174L1283 174L1248 174L1214 174L1179 174L1144 174L1110 174L1075 174L1041 174L1006 174L972 174L937 174L902 174" fill="none" stroke="#c0c0c0" stroke-width="2.0833" stroke-opacity="0.5" stroke-dasharray="2.0833 3.4375" stroke-linejoin="round" clip-path="url(#c1)"/>
<path d="M902 125L878 125L854 125L829 125L805 125L780 125L756 125L731 125L707 125L682 125L658 125L634 125L609 125" fill="none" stroke="#c0c0c0" stroke-width="2.0833" stroke-opacity="0.5" stroke-dasharray="2.0833 3.4375" stroke-linejoin="round" clip-path="url(#c1)"/>
<path d="M1196 125L1171 125L1147 125L1122 125L1098 125L1074 125L1049 125L1025 125L1000 125L976 125L951 125L927 125L902 125" fill="none" stroke="#c0c0c0" stroke-width="2.0833" stroke-opacity="0.5" stroke-dasharray="2.0833 3.4375" stroke-linejoin="round" clip-path="url(#c1)"/>
<path d="M902 76L890 76L877 76L864 76L852 76L839 76L826 76L814 76L801 76L789 76L776 76L763 76L751 76" fill="none" stroke="#c0c0c0" stroke-width="2.0833" stroke-opacity="0.5" stroke-dasharray="2.0833 3.4375" stroke-linejoin="round" clip-path="url(#c1)"/>
<path d="M1054 76L1042 76L1029 76L1016 76L1004 76L991 76L978 76L966 76L953 76L940 76L928 76L915 76L902 76" fill="none" stroke="#c0c0c0" stroke-width="2.0833" stroke-opacity="0.5" stroke-dasharray="2.0833 3.4375" stroke-linejoin="round" clip-path="url(#c1)"/>
<path d="M761.609 265.558L763.647 264.756L765.687 263.961L767.728 263.171L769.771 262.387L771.814 261.609L773.858 260.838L775.903 260.072L777.948 259.313L779.994 258.56L782.041 257.813L784.088 257.073L786.135 256.34L788.183 255.613L790.231 254.894L792.279 254.181L794.327 253.476L796.374 252.778L798.422 252.087L800.47 251.403L802.517 250.727L804.565 250.059L806.611 249.398L808.658 248.745L810.704 248.1L812.749 247.463L814.794 246.834L816.838 246.213L818.882 245.601L820.924 244.997L822.966 244.402L825.008 243.815L827.048 243.237L829.088 242.668L831.127 242.107L833.164 241.556L835.201 241.014L837.237 240.481L839.272 239.957L841.307 239.443L843.34 238.938L845.372 238.443L847.403 237.957L849.433 237.481L851.462 237.015L853.49 236.559L855.517 236.113L857.544 235.677L859.569 235.251L861.593 234.835L863.617 234.43L865.639 234.035L867.661 233.651L869.682 233.277L871.702 232.914L873.721 232.562L875.739 232.22L877.757 231.889L879.774 231.569L881.791 231.261L883.806 230.963L885.822 230.676L887.837 230.401L889.851 230.136L891.865 229.883L893.879 229.642L895.893 229.412L897.906 229.193L899.919 228.985L901.932 228.79L903.945 228.605L905.958 228.433L907.972 228.272L909.985 228.123L911.999 227.985L914.013 227.859L916.027 227.745L918.042 227.643L920.057 227.553L922.073 227.474L924.09 227.408L926.107 227.353L928.125 227.31L930.145 227.279L932.165 227.26L934.186 227.253L936.208 227.257L938.231 227.274L940.256 227.302L942.282 227.343L944.309 227.395L946.338 227.459L948.368 227.535L950.4 227.623L952.433 227.723L954.469 227.835L956.506 227.958L958.544 228.093L960.585 228.24L962.627 228.398" fill="none" stroke="#4ec36b" stroke-width="1.3889" stroke-dasharray="1.3889 2.2917" stroke-linejoin="round" clip-path="url(#c1)"/>
<path d="M758.5 266.5L764.5 266.5M761.5 269.5L761.5 263.5" fill="#ff0000" stroke="#ff0000" stroke-width="1.3889" stroke-linejoin="round" clip-path="url(#c1)"/>
<path d="M908.412 437.599L910.659 436.737L912.906 435.856L915.154 434.957L917.402 434.039L919.651 433.102L921.901 432.149L924.151 431.178L926.402 430.189L928.654 429.184L930.907 428.163L933.16 427.125L935.414 426.072L937.669 425.003L939.924 423.919L942.18 422.82L944.436 421.706L946.693 420.578L948.95 419.436L951.208 418.281L953.465 417.112L955.723 415.929L957.98 414.734L960.238 413.527L962.494 412.307L964.751 411.075L967.007 409.831L969.261 408.576L971.515 407.31L973.768 406.032L976.019 404.744L978.269 403.446L980.517 402.137L982.764 400.819L985.008 399.49L987.249 398.153L989.489 396.806L991.725 395.45L993.958 394.085L996.189 392.712L998.416 391.331L1000.639 389.941L1002.858 388.544L1005.074 387.139L1007.285 385.727L1009.491 384.307L1011.693 382.881L1013.89 381.448L1016.081 380.008L1018.267 378.561L1020.447 377.109L1022.621 375.651L1024.789 374.186L1026.951 372.717L1029.106 371.241L1031.253 369.761L1033.394 368.275L1035.527 366.785L1037.653 365.29L1039.771 363.79L1041.88 362.286L1043.981 360.778L1046.074 359.266L1048.158 357.749L1050.233 356.23L1052.298 354.706L1054.354 353.18L1056.401 351.65L1058.437 350.117L1060.463 348.582L1062.479 347.043L1064.484 345.502L1066.479 343.959L1068.462 342.413L1070.435 340.866L1072.396 339.316L1074.345 337.765L1076.283 336.211L1078.209 334.657L1080.123 333.101L1082.024 331.544L1083.913 329.986L1085.79 328.427L1087.653 326.867L1089.504 325.306L1091.342 323.746L1093.167 322.184L1094.978 320.623L1096.776 319.062L1098.56 317.5L1100.33 315.939L1102.087 314.379L1103.83 312.819L1105.558 311.259L1107.273 309.701L1108.973 308.143L1110.659 306.587L1112.331 305.032L1113.989 303.478L1115.632 301.926" fill="none" stroke="#666666" stroke-width="1.3889" stroke-opacity="0.7" stroke-dasharray="1.3889 2.2917" stroke-linejoin="round" clip-path="url(#c1)"/>
<path d="M768.84 247.354L765.661 247.563L762.411 248.187L759.147 249.212L755.926 250.621L752.809 252.386L749.854 254.476L747.119 256.852L744.659 259.471L742.521 262.289L740.749 265.257L739.378 268.326L738.432 271.443L737.929 274.56L737.876 277.626L738.271 280.592L739.1 283.411L740.345 286.04L741.976 288.438L743.959 290.567L746.253 292.394L748.812 293.891L751.589 295.035L754.533 295.808L757.592 296.197L760.716 296.197L763.853 295.808L766.956 295.035L769.977 293.891L772.873 292.394L775.601 290.567L778.126 288.438L780.411 286.04L782.426 283.411L784.145 280.592L785.544 277.626L786.604 274.56L787.31 271.443L787.652 268.326L787.622 265.257L787.22 262.289L786.447 259.471L785.311 256.852L783.824 254.476L782.003 252.386L779.869 250.621L777.451 249.212L774.78 248.187L771.896 247.563L768.84 247.354" fill="none" stroke="#4ec36b" stroke-width="2.0833" stroke-linecap="square" stroke-linejoin="round" clip-path="url(#c1)"/>
<path d="M316.5 614.5L316.5 27.5" fill="none" stroke="#000000" stroke-width="1.1111" stroke-linecap="square"/>
<path d="M1489.5 614.5L1489.5 27.5" fill="none" stroke="#000000" stroke-width="1.1111" stroke-linecap="square"/>
<path d="M316.5 614.5L1489.5 614.5" fill="none" stroke="#000000" stroke-width="1.1111" stroke-linecap="square"/>
<path d="M316.5 27.5L1489.5 27.5" fill="none" stroke="#000000" stroke-width="1.1111" stroke-linecap="square"/>
<text class="g" x="890 898 904" y="624">−90<tspan class="o" x="912" y="619">∘</tspan></text>
<text class="g" x="890 898 904" y="526">−60<tspan class="o" x="912" y="521">∘</tspan></text>
<text class="g" x="890 898 904" y="428">−30<tspan class="o" x="912" y="423">∘</tspan></text>
<text class="g" x="893 901" y="330">+0<tspan class="o" x="908" y="325">∘</tspan></text>
<text class="g" x="890 898 904" y="221">+30<tspan class="o" x="912" y="216">∘</tspan></text>
<text class="g" x="890 898 904" y="123">+60<tspan class="o" x="912" y="118">∘</tspan></text>
<text class="g" x="890 898 904" y="25">+90<tspan class="o" x="912" y="20">∘</tspan></text>
<text class="g" x="893 901" y="330">+0<tspan class="o" x="908" y="325">∘</tspan></text>
<text class="g" x="792 800 806" y="330">+30<tspan class="o" x="814" y="325">∘</tspan></text>
<text class="g" x="694 702 708" y="330">+60<tspan class="o" x="716" y="325">∘</tspan></text>
<text class="g" x="596 604 610" y="330">+90<tspan class="o" x="618" y="325">∘</tspan></text>
<text class="g" x="496 504 510 516" y="330">+120<tspan class="o" x="524" y="325">∘</tspan></text>
<text class="g" x="398 406 412 418" y="330">+150<tspan class="o" x="426" y="325">∘</tspan></text>
<text class="g" x="300 308 314 320" y="330">+180<tspan class="o" x="328" y="325">∘</tspan></text>
<text class="g" x="1474 1482 1488 1494" y="330">+180<tspan class="o" x="1502" y="325">∘</tspan></text>
<text class="g" x="1376 1384 1390 1396" y="330">+210<tspan class="o" x="1404" y="325">∘</tspan></text>
<text class="g" x="1278 1286 1292 1298" y="330">+240<tspan class="o" x="1306" y="325">∘</tspan></text>
<text class="g" x="1180 1188 1194 1200" y="330">+270<tspan class="o" x="1208" y="325">∘</tspan></text>
<text class="g" x="1082 1090 1096 1102" y="330">+300<tspan class="o" x="1110" y="325">∘</tspan></text>
<text class="g" x="985 993 999 1005" y="330">+330<tspan class="o" x="1013" y="325">∘</tspan></text>
<text class="m" x="316 324.375 332.75 341.125 349.5 357.875" y="30">UK002J</text>
<text class="m" x="316 324.375 332.75 341.125 349.5 357.875 366.25 374.625 383 391.375 399.75 408.125 416.5 424.875 433.25 441.625 450 458.375 466.75 475.125 483.5 491.875 500.25 508.625 517 525.375 533.75 542.125 550.5 558.875 567.25 575.625 584 592.375 600.75 609.125 617.5 625.875" y="43 43 43 43 43 43 43 43 43 43 43 43 43 43 43 43 43 43 43 43 43 43 43 43 43 43 43 43 43 43 43 43 43 43 43 43 44 43" xml:space="preserve">Beg: 20251028 19:57:44 (sol = 215.30°)</text>
<text class="m" x="316 324.375 332.75 341.125 349.5 357.875 366.25 374.625 383 391.375 399.75 408.125 416.5 424.875 433.25 441.625 450 458.375 466.75 475.125 483.5 491.875 500.25 508.625 517 525.375 533.75 542.125 550.5 558.875 567.25 575.625 584 592.375 600.75 609.125 617.5 625.875" y="57 57 57 57 57 57 57 57 57 57 57 57 57 57 57 57 57 57 57 57 57 57 57 57 57 57 57 57 57 57 57 57 57 57 57 57 58 57" xml:space="preserve">End: 20251028 19:59:11 (sol = 215.30°)</text>
<text class="m" x="316 323.375 331.75 340.125 348.5 356.875 365.25 373.625 382 390.375 398.75 407.125 415.5 423.875 432.25 440.625 449 457.375 465.75 474.125 482.5 490.875 499.25 507.625 516 524.375 532.75 541.125 549.5 557.875 566.25 574.625 583 591.375 599.75 608.125 616.5 624.875" y="69">--------------------------------------</text>
<text class="m" x="316 324.375 332.75 341.125 349.5 357.875" y="82" xml:space="preserve">...: 1</text>
<text class="m" x="316 324.375 332.75 341.125 349.5 357.875" y="95" xml:space="preserve">STA: 1</text>
<path d="M962.627 228.398L970.494 229.115L978.392 230.002L986.323 231.056L994.29 232.274L1002.292 233.652L1010.33 235.186L1018.403 236.871L1026.509 238.704L1034.646 240.678L1042.811 242.789L1051.001 245.031" fill="none" stroke="#4ec36b" stroke-width="1.3889" stroke-linecap="square" stroke-linejoin="round" clip-path="url(#c1)"/>
<path d="M1115.76 301.805L1115.503 302.048L1115.247 302.291" fill="none" stroke="#666666" stroke-width="1.3889" stroke-linecap="square" stroke-linejoin="round" clip-path="url(#c1)"/>
<path d="M1050 246L1052 246L1052 244L1050 244Z" fill="#ff6347" clip-path="url(#c1)"/>
<path d="M1115 303L1117 303L1117 301L1115 301Z" fill="#666666" clip-path="url(#c1)"/>
<text class="s" x="753 759.125 765" y="275">STA</text>
<text class="M" transform="translate(149 697) rotate(-90)" x="0 18 34.75">APR</text>
<text class="M" transform="translate(295 700) rotate(-90)" x="-2 21 37.875">MAY</text>
<text class="M" transform="translate(436 691) rotate(-90)" x="2 9.25 29.5">JUN</text>
<text class="M" transform="translate(577 686) rotate(-90)" x="2 9.25 29.5">JUL</text>
<text class="M" transform="translate(724 703) rotate(-90)" x="0 18 38.25">AUG</text>
<text class="M" transform="translate(872 694) rotate(-90)" x="-1 15.625 33.25">SEP</text>
<text class="M" transform="translate(1017 700) rotate(-90)" x="-1 19.75 39.125">OCT</text>
<text class="M" transform="translate(1170 703) rotate(-90)" x="-2 17.75 39">NOV</text>
<text class="M" transform="translate(1319 700) rotate(-90)" x="-2 18.375 36">DEC</text>
<text class="M" transform="translate(1469 689) rotate(-90)" x="2 8.75 27.75">JAN</text>
<text class="M" transform="translate(1628 695) rotate(-90)" x="-2 13 30.625">FEB</text>
<text class="M" transform="translate(1766 704) rotate(-90)" x="-2 21 40">MAR</text>
<path d="M20.5 842.5L20.5 847.5" fill="#ffffff" stroke="#ffffff" stroke-width="1.1111" stroke-linejoin="round"/>
<text class="t" x="16" y="862">0</text>
<path d="M265.5 842.5L265.5 847.5" fill="#ffffff" stroke="#ffffff" stroke-width="1.1111" stroke-linejoin="round"/>
<text class="t" x="256 263.75" y="862">50</text>
<path d="M510.5 842.5L510.5 847.5" fill="#ffffff" stroke="#ffffff" stroke-width="1.1111" stroke-linejoin="round"/>
<text class="t" x="498 505.875 514.625" y="862">100</text>
<path d="M755.5 842.5L755.5 847.5" fill="#ffffff" stroke="#ffffff" stroke-width="1.1111" stroke-linejoin="round"/>
<text class="t" x="743 750.875 759.625" y="862">150</text>
<path d="M1000.5 842.5L1000.5 847.5" fill="#ffffff" stroke="#ffffff" stroke-width="1.1111" stroke-linejoin="round"/>
<text class="t" x="987 995.75 1004.5" y="862">200</text>
<path d="M1246.5 842.5L1246.5 847.5" fill="#ffffff" stroke="#ffffff" stroke-width="1.1111" stroke-linejoin="round"/>
<text class="t" x="1233 1241.75 1250.5" y="862">250</text>
<path d="M1491.5 842.5L1491.5 847.5" fill="#ffffff" stroke="#ffffff" stroke-width="1.1111" stroke-linejoin="round"/>
<text class="t" x="1478 1485.75 1494.5" y="862">300</text>
<path d="M1736.5 842.5L1736.5 847.5" fill="#ffffff" stroke="#ffffff" stroke-width="1.1111" stroke-linejoin="round"/>
<text class="t" x="1723 1730.75 1739.5" y="862">350</text>
<text class="t" x="829 837.75 846.25 850.125 858.75 864.5 868.875 872.75 881.25 890 898.875 902.75 908.25 917 925.875 934.375 938.75 944.25 953.125 961.625 970.5" y="882" xml:space="preserve">Solar longitude (deg)</text>
<path d="M1076.5 842.5L1076.5 792.5L1076.5 741.5L1076.5 691.5L1076.5 641.5" fill="none" stroke="#ff0000" stroke-width="1.3889" stroke-dasharray="5.1389 2.2222" stroke-linejoin="round" clip-path="url(#c2)"/>
<path d="M1076.5 842.5L1076.5 792.5L1076.5 741.5L1076.5 691.5L1076.5 641.5" fill="none" stroke="#ff0000" stroke-width="1.3889" stroke-dasharray="5.1389 2.2222" stroke-linejoin="round" clip-path="url(#c2)"/>
<path d="M20.5 842.5L20.5 641.5" fill="none" stroke="#ffffff" stroke-width="1.1111" stroke-linecap="square"/>
<path d="M1785.5 842.5L1785.5 641.5" fill="none" stroke="#ffffff" stroke-width="1.1111" stroke-linecap="square"/>
<path d="M20.5 842.5L1785.5 842.5" fill="none" stroke="#ffffff" stroke-width="1.1111" stroke-linecap="square"/>
<path d="M20.5 641.5L1785.5 641.5" fill="none" stroke="#ffffff" stroke-width="1.1111" stroke-linecap="square"/>
<path d="M108 834L128 834" fill="none" stroke="#bddf26" stroke-width="4.1667" stroke-linecap="square" stroke-linejoin="round" clip-path="url(#c2)"/>
<text class="s" x="107 113.25 120.375" y="832">KSE</text>
<path d="M167 834L343 834" fill="none" stroke="#bddf26" stroke-width="4.1667" stroke-linecap="square" stroke-linejoin="round" clip-path="url(#c2)"/>
<text class="s" x="245 251 256.875" y="832">ETA</text>
<path d="M368 834L623 834" fill="none" stroke="#bddf26" stroke-width="4.1667" stroke-linecap="square" stroke-linejoin="round" clip-path="url(#c2)"/>
<text class="s" x="484 491.375 499" y="832">NZC</text>
<path d="M638 834L785 834" fill="none" stroke="#bddf26" stroke-width="4.1667" stroke-linecap="square" stroke-linejoin="round" clip-path="url(#c2)"/>
<text class="s" x="699 706.375 714.625" y="832">NDA</text>
<path d="M809 834L898 834" fill="none" stroke="#bddf26" stroke-width="4.1667" stroke-linecap="square" stroke-linejoin="round" clip-path="url(#c2)"/>
<text class="s" x="844 850.125 856.875" y="832">SPE</text>
<path d="M922 834L971 834" fill="none" stroke="#bddf26" stroke-width="4.1667" stroke-linecap="square" stroke-linejoin="round" clip-path="url(#c2)"/>
<text class="s" x="935 941.625 949.375" y="832">ARD</text>
<path d="M986 834L1064 834" fill="none" stroke="#bddf26" stroke-width="4.1667" stroke-linecap="square" stroke-linejoin="round" clip-path="url(#c2)"/>
<text class="s" x="1014 1020 1028.625" y="832">EGE</text>
<path d="M1084 834L1202 834" fill="none" stroke="#bddf26" stroke-width="4.1667" stroke-linecap="square" stroke-linejoin="round" clip-path="url(#c2)"/>
<text class="s" x="1132 1139.375 1145.25" y="832">NTA</text>
<path d="M1246 834L1324 834" fill="none" stroke="#bddf26" stroke-width="4.1667" stroke-linecap="square" stroke-linejoin="round" clip-path="url(#c2)"/>
<text class="s" x="1272 1280.625 1289.375" y="832">MON</text>
<path d="M1339 834L1354 834" fill="none" stroke="#bddf26" stroke-width="4.1667" stroke-linecap="square" stroke-linejoin="round" clip-path="url(#c2)"/>
<text class="s" x="1332 1340.125 1347.875" y="832">URS</text>
<path d="M1383 834L1442 834" fill="none" stroke="#bddf26" stroke-width="4.1667" stroke-linecap="square" stroke-linejoin="round" clip-path="url(#c2)"/>
<text class="s" x="1401 1407.625 1416" y="832">AHY</text>
<path d="M1461 834L1510 834" fill="none" stroke="#bddf26" stroke-width="4.1667" stroke-linecap="square" stroke-linejoin="round" clip-path="url(#c2)"/>
<text class="s" x="1473 1480.625 1488.75" y="832">GUM</text>
<path d="M1525 834L1545 834" fill="none" stroke="#bddf26" stroke-width="4.1667" stroke-linecap="square" stroke-linejoin="round" clip-path="url(#c2)"/>
<text class="s" x="1524 1531.75 1540.125" y="832">OHY</text>
<path d="M1726 834L1746 834" fill="none" stroke="#bddf26" stroke-width="4.1667" stroke-linecap="square" stroke-linejoin="round" clip-path="url(#c2)"/>
<text class="s" x="1725 1731.625 1740" y="832">XHE</text>
<path d="M1760 834L1780 834" fill="none" stroke="#bddf26" stroke-width="4.1667" stroke-linecap="square" stroke-linejoin="round" clip-path="url(#c2)"/>
<text class="s" x="1761 1767 1774.625" y="832">EVI</text>
<path d="M167 818L187 818" fill="none" stroke="#81d34d" stroke-width="4.1667" stroke-linecap="square" stroke-linejoin="round" clip-path="url(#c2)"/>
<text class="s" x="166 171.875 179.5" y="815">AVB</text>
<path d="M226 818L285 818" fill="none" stroke="#81d34d" stroke-width="4.1667" stroke-linecap="square" stroke-linejoin="round" clip-path="url(#c2)"/>
<text class="s" x="246 252 256.75" y="815">ELY</text>
<path d="M314 818L339 818" fill="none" stroke="#81d34d" stroke-width="4.1667" stroke-linecap="square" stroke-linejoin="round" clip-path="url(#c2)"/>
<text class="s" x="312 318.75 326.375" y="815">CAM</text>
<path d="M368 818L491 818" fill="none" stroke="#81d34d" stroke-width="4.1667" stroke-linecap="square" stroke-linejoin="round" clip-path="url(#c2)"/>
<text class="s" x="421 427.125 434.25" y="815">SSG</text>
<path d="M510 818L652 818" fill="none" stroke="#81d34d" stroke-width="4.1667" stroke-linecap="square" stroke-linejoin="round" clip-path="url(#c2)"/>
<text class="s" x="568 573.75 581.5" y="815">PCA</text>
<path d="M706 818L736 818" fill="none" stroke="#81d34d" stroke-width="4.1667" stroke-linecap="square" stroke-linejoin="round" clip-path="url(#c2)"/>
<text class="s" x="709 715.625 723.75" y="815">AUD</text>
<path d="M775 818L844 818" fill="none" stroke="#81d34d" stroke-width="4.1667" stroke-linecap="square" stroke-linejoin="round" clip-path="url(#c2)"/>
<text class="s" x="798 804.625 812.75" y="815">AUR</text>
<path d="M873 818L986 818" fill="none" stroke="#81d34d" stroke-width="4.1667" stroke-linecap="square" stroke-linejoin="round" clip-path="url(#c2)"/>
<text class="s" x="920 927.5 934.625" y="815">DSX</text>
<path d="M1005 818L1015 818" fill="none" stroke="#81d34d" stroke-width="4.1667" stroke-linecap="square" stroke-linejoin="round" clip-path="url(#c2)"/>
<text class="s" x="999 1006.75 1014.5" y="815">OCU</text>
<path d="M1064 818L1211 818" fill="none" stroke="#81d34d" stroke-width="4.1667" stroke-linecap="square" stroke-linejoin="round" clip-path="url(#c2)"/>
<text class="s" x="1127 1134.75 1141.75" y="815">OER</text>
<path d="M1246 818L1265 818" fill="none" stroke="#81d34d" stroke-width="4.1667" stroke-linecap="square" stroke-linejoin="round" clip-path="url(#c2)"/>
<text class="s" x="1243 1250.5 1257.75" y="815">DKD</text>
<path d="M1295 818L1314 818" fill="none" stroke="#81d34d" stroke-width="4.1667" stroke-linecap="square" stroke-linejoin="round" clip-path="url(#c2)"/>
<text class="s" x="1293 1300.5 1307.625" y="815">DSV</text>
<path d="M1344 818L1363 818" fill="none" stroke="#81d34d" stroke-width="4.1667" stroke-linecap="square" stroke-linejoin="round" clip-path="url(#c2)"/>
<text class="s" x="1344 1350.625 1355.375" y="815">ALY</text>
<path d="M1388 818L1427 818" fill="none" stroke="#81d34d" stroke-width="4.1667" stroke-linecap="square" stroke-linejoin="round" clip-path="url(#c2)"/>
<text class="s" x="1400 1402.25 1408.5" y="815">JLE</text>
<path d="M1461 818L1481 818" fill="none" stroke="#81d34d" stroke-width="4.1667" stroke-linecap="square" stroke-linejoin="round" clip-path="url(#c2)"/>
<text class="s" x="1461 1467.125 1474.875" y="815">SCC</text>
<path d="M1550 818L1569 818" fill="none" stroke="#81d34d" stroke-width="4.1667" stroke-linecap="square" stroke-linejoin="round" clip-path="url(#c2)"/>
<text class="s" x="1549 1554.375 1561.375" y="815">FEV</text>
<path d="M167 802L187 802" fill="none" stroke="#4ec36b" stroke-width="4.1667" stroke-linecap="square" stroke-linejoin="round" clip-path="url(#c2)"/>
<text class="s" x="167 170.75 177.5" y="799">LYR</text>
<path d="M260 802L486 802" fill="none" stroke="#4ec36b" stroke-width="4.1667" stroke-linecap="square" stroke-linejoin="round" clip-path="url(#c2)"/>
<text class="s" x="363 365.25 374.875" y="799">JMC</text>
<path d="M510 802L613 802" fill="none" stroke="#4ec36b" stroke-width="4.1667" stroke-linecap="square" stroke-linejoin="round" clip-path="url(#c2)"/>
<text class="s" x="551 553.25 560" y="799">JPE</text>
<path d="M628 802L716 802" fill="none" stroke="#4ec36b" stroke-width="4.1667" stroke-linecap="square" stroke-linejoin="round" clip-path="url(#c2)"/>
<text class="s" x="661 666 673.625" y="799">PAU</text>
<path d="M731 802L824 802" fill="none" stroke="#4ec36b" stroke-width="4.1667" stroke-linecap="square" stroke-linejoin="round" clip-path="url(#c2)"/>
<text class="s" x="765 772.375 775.625" y="799">NIA</text>
<path d="M951 802L1148 802" fill="none" stroke="#4ec36b" stroke-width="4.1667" stroke-linecap="square" stroke-linejoin="round" clip-path="url(#c2)"/>
<text class="s" x="1040 1046.125 1052" y="799">STA</text>
<path d="M1162 802L1246 802" fill="none" stroke="#4ec36b" stroke-width="4.1667" stroke-linecap="square" stroke-linejoin="round" clip-path="url(#c2)"/>
<text class="s" x="1194 1201.375 1210.125" y="799">NOO</text>
<path d="M1260 802L1442 802" fill="none" stroke="#4ec36b" stroke-width="4.1667" stroke-linecap="square" stroke-linejoin="round" clip-path="url(#c2)"/>
<text class="s" x="1341 1347.75 1356.5" y="799">COM</text>
<path d="M1461 802L1481 802" fill="none" stroke="#4ec36b" stroke-width="4.1667" stroke-linecap="square" stroke-linejoin="round" clip-path="url(#c2)"/>
<text class="s" x="1459 1466.375 1474.125" y="799">NCC</text>
<path d="M1555 802L1574 802" fill="none" stroke="#4ec36b" stroke-width="4.1667" stroke-linecap="square" stroke-linejoin="round" clip-path="url(#c2)"/>
<text class="s" x="1554 1559.375 1566.375" y="799">FED</text>
<path d="M196 785L216 785" fill="none" stroke="#2ab07f" stroke-width="4.1667" stroke-linecap="square" stroke-linejoin="round" clip-path="url(#c2)"/>
<text class="s" x="197 204.375 212" y="783">HVI</text>
<path d="M324 785L505 785" fill="none" stroke="#2ab07f" stroke-width="4.1667" stroke-linecap="square" stroke-linejoin="round" clip-path="url(#c2)"/>
<text class="s" x="403 409.625 417.375" y="783">ARI</text>
<path d="M520 785L540 785" fill="none" stroke="#2ab07f" stroke-width="4.1667" stroke-linecap="square" stroke-linejoin="round" clip-path="url(#c2)"/>
<text class="s" x="519 525.125 532.75" y="783">SZC</text>
<path d="M559 785L682 785" fill="none" stroke="#2ab07f" stroke-width="4.1667" stroke-linecap="square" stroke-linejoin="round" clip-path="url(#c2)"/>
<text class="s" x="608 614.75 622.375" y="783">CAP</text>
<path d="M809 785L829 785" fill="none" stroke="#2ab07f" stroke-width="4.1667" stroke-linecap="square" stroke-linejoin="round" clip-path="url(#c2)"/>
<text class="s" x="807 814.375 822.5" y="783">NUE</text>
<path d="M956 785L971 785" fill="none" stroke="#2ab07f" stroke-width="4.1667" stroke-linecap="square" stroke-linejoin="round" clip-path="url(#c2)"/>
<text class="s" x="950 957.75 965.5" y="783">OCT</text>
<path d="M991 785L1123 785" fill="none" stroke="#2ab07f" stroke-width="4.1667" stroke-linecap="square" stroke-linejoin="round" clip-path="url(#c2)"/>
<text class="s" x="1050 1057.75 1065.5" y="783">ORI</text>
<path d="M1157 785L1216 785" fill="none" stroke="#2ab07f" stroke-width="4.1667" stroke-linecap="square" stroke-linejoin="round" clip-path="url(#c2)"/>
<text class="s" x="1174 1180.625 1190.25" y="783">AMO</text>
<path d="M1246 785L1265 785" fill="none" stroke="#2ab07f" stroke-width="4.1667" stroke-linecap="square" stroke-linejoin="round" clip-path="url(#c2)"/>
<text class="s" x="1244 1251.5 1258.25" y="783">DPC</text>
<path d="M1319 785L1339 785" fill="none" stroke="#2ab07f" stroke-width="4.1667" stroke-linecap="square" stroke-linejoin="round" clip-path="url(#c2)"/>
<text class="s" x="1320 1326.625 1334.25" y="783">XVI</text>
<path d="M1398 785L1417 785" fill="none" stroke="#2ab07f" stroke-width="4.1667" stroke-linecap="square" stroke-linejoin="round" clip-path="url(#c2)"/>
<text class="s" x="1396 1403.75 1411.875" y="783">QUA</text>
<path d="M1466 785L1648 785" fill="none" stroke="#2ab07f" stroke-width="4.1667" stroke-linecap="square" stroke-linejoin="round" clip-path="url(#c2)"/>
<text class="s" x="1548 1554.875 1562.5" y="783">AAN</text>
<path d="M343 769L368 769" fill="none" stroke="#1e9b8a" stroke-width="4.1667" stroke-linecap="square" stroke-linejoin="round" clip-path="url(#c2)"/>
<text class="s" x="342 347.875 355.5" y="766">TAH</text>
<path d="M412 769L446 769" fill="none" stroke="#1e9b8a" stroke-width="4.1667" stroke-linecap="square" stroke-linejoin="round" clip-path="url(#c2)"/>
<text class="s" x="423 425.25 432.25" y="766">JEA</text>
<path d="M471 769L491 769" fill="none" stroke="#1e9b8a" stroke-width="4.1667" stroke-linecap="square" stroke-linejoin="round" clip-path="url(#c2)"/>
<text class="s" x="475 477.25 480.5" y="766">JIP</text>
<path d="M530 769L544 769" fill="none" stroke="#1e9b8a" stroke-width="4.1667" stroke-linecap="square" stroke-linejoin="round" clip-path="url(#c2)"/>
<text class="s" x="529 534.75 541.5" y="766">PPS</text>
<path d="M564 769L589 769" fill="none" stroke="#1e9b8a" stroke-width="4.1667" stroke-linecap="square" stroke-linejoin="round" clip-path="url(#c2)"/>
<text class="s" x="568 574.625 582.375" y="766">ZCS</text>
<path d="M618 769L647 769" fill="none" stroke="#1e9b8a" stroke-width="4.1667" stroke-linecap="square" stroke-linejoin="round" clip-path="url(#c2)"/>
<text class="s" x="621 628.625 637.125" y="766">GDR</text>
<path d="M961 769L986 769" fill="none" stroke="#1e9b8a" stroke-width="4.1667" stroke-linecap="square" stroke-linejoin="round" clip-path="url(#c2)"/>
<text class="s" x="960 967.5 974.75" y="766">DRA</text>
<path d="M1064 769L1084 769" fill="none" stroke="#1e9b8a" stroke-width="4.1667" stroke-linecap="square" stroke-linejoin="round" clip-path="url(#c2)"/>
<text class="s" x="1062 1066.75 1074.875" y="766">LUM</text>
<path d="M1103 769L1123 769" fill="none" stroke="#1e9b8a" stroke-width="4.1667" stroke-linecap="square" stroke-linejoin="round" clip-path="url(#c2)"/>
<text class="s" x="1102 1108.75 1115.5" y="766">RPU</text>
<path d="M1162 769L1192 769" fill="none" stroke="#1e9b8a" stroke-width="4.1667" stroke-linecap="square" stroke-linejoin="round" clip-path="url(#c2)"/>
<text class="s" x="1166 1172.75 1181.125" y="766">THA</text>
<path d="M1251 769L1270 769" fill="none" stroke="#1e9b8a" stroke-width="4.1667" stroke-linecap="square" stroke-linejoin="round" clip-path="url(#c2)"/>
<text class="s" x="1249 1254.75 1261.875" y="766">PSU</text>
<path d="M1427 769L1510 769" fill="none" stroke="#1e9b8a" stroke-width="4.1667" stroke-linecap="square" stroke-linejoin="round" clip-path="url(#c2)"/>
<text class="s" x="1460 1465.875 1473.625" y="766">XCB</text>
<path d="M422 752L442 752" fill="none" stroke="#25858e" stroke-width="4.1667" stroke-linecap="square" stroke-linejoin="round" clip-path="url(#c2)"/>
<text class="s" x="423 425.25 432.5" y="750">JRC</text>
<path d="M535 752L554 752" fill="none" stroke="#25858e" stroke-width="4.1667" stroke-linecap="square" stroke-linejoin="round" clip-path="url(#c2)"/>
<text class="s" x="533 539.75 547.375" y="750">CAN</text>
<path d="M569 752L589 752" fill="none" stroke="#25858e" stroke-width="4.1667" stroke-linecap="square" stroke-linejoin="round" clip-path="url(#c2)"/>
<text class="s" x="568 572.375 580" y="750">FAN</text>
<path d="M623 752L741 752" fill="none" stroke="#25858e" stroke-width="4.1667" stroke-linecap="square" stroke-linejoin="round" clip-path="url(#c2)"/>
<text class="s" x="671 676.75 683.75" y="750">PER</text>
<path d="M971 752L1133 752" fill="none" stroke="#25858e" stroke-width="4.1667" stroke-linecap="square" stroke-linejoin="round" clip-path="url(#c2)"/>
<text class="s" x="1040 1046.75 1052.625" y="750">CTA</text>
<path d="M1187 752L1344 752" fill="none" stroke="#25858e" stroke-width="4.1667" stroke-linecap="square" stroke-linejoin="round" clip-path="url(#c2)"/>
<text class="s" x="1254 1261.375 1268.125" y="750">HYD</text>
<path d="M1471 752L1491 752" fill="none" stroke="#25858e" stroke-width="4.1667" stroke-linecap="square" stroke-linejoin="round" clip-path="url(#c2)"/>
<text class="s" x="1469 1475.625 1483.75" y="750">XUM</text>
<path d="M432 736L451 736" fill="none" stroke="#2d708e" stroke-width="4.1667" stroke-linecap="square" stroke-linejoin="round" clip-path="url(#c2)"/>
<text class="s" x="430 436.75 445.5" y="733">COR</text>
<path d="M579 736L731 736" fill="none" stroke="#2d708e" stroke-width="4.1667" stroke-linecap="square" stroke-linejoin="round" clip-path="url(#c2)"/>
<text class="s" x="647 653.125 661.375" y="733">SDA</text>
<path d="M996 736L1103 736" fill="none" stroke="#2d708e" stroke-width="4.1667" stroke-linecap="square" stroke-linejoin="round" clip-path="url(#c2)"/>
<text class="s" x="1040 1045.25 1054.875" y="733">LMI</text>
<path d="M1118 736L1221 736" fill="none" stroke="#2d708e" stroke-width="4.1667" stroke-linecap="square" stroke-linejoin="round" clip-path="url(#c2)"/>
<text class="s" x="1156 1161.25 1168.25" y="733">LEO</text>
<path d="M1265 736L1290 736" fill="none" stroke="#2d708e" stroke-width="4.1667" stroke-linecap="square" stroke-linejoin="round" clip-path="url(#c2)"/>
<text class="s" x="1264 1270 1278.375" y="733">EHY</text>
<path d="M1491 736L1510 736" fill="none" stroke="#2d708e" stroke-width="4.1667" stroke-linecap="square" stroke-linejoin="round" clip-path="url(#c2)"/>
<text class="s" x="1490 1496 1503.75" y="733">ECV</text>
<path d="M594 720L613 720" fill="none" stroke="#375a8c" stroke-width="4.1667" stroke-linecap="square" stroke-linejoin="round" clip-path="url(#c2)"/>
<text class="s" x="595 597.25 604.875" y="717">JXA</text>
<path d="M657 720L770 720" fill="none" stroke="#375a8c" stroke-width="4.1667" stroke-linecap="square" stroke-linejoin="round" clip-path="url(#c2)"/>
<text class="s" x="705 710.625 718.375" y="717">KCG</text>
<path d="M1074 720L1241 720" fill="none" stroke="#375a8c" stroke-width="4.1667" stroke-linecap="square" stroke-linejoin="round" clip-path="url(#c2)"/>
<text class="s" x="1145 1151.625 1160" y="717">AND</text>
<path d="M1265 720L1285 720" fill="none" stroke="#375a8c" stroke-width="4.1667" stroke-linecap="square" stroke-linejoin="round" clip-path="url(#c2)"/>
<text class="s" x="1263 1270.25 1277.875" y="717">DAD</text>
<path d="M598 703L731 703" fill="none" stroke="#424086" stroke-width="4.1667" stroke-linecap="square" stroke-linejoin="round" clip-path="url(#c2)"/>
<text class="s" x="658 664 671.75" y="701">ERI</text>
<path d="M1094 703L1118 703" fill="none" stroke="#424086" stroke-width="4.1667" stroke-linecap="square" stroke-linejoin="round" clip-path="url(#c2)"/>
<text class="s" x="1098 1104.125 1110.375" y="701">SLD</text>
<path d="M1202 703L1221 703" fill="none" stroke="#424086" stroke-width="4.1667" stroke-linecap="square" stroke-linejoin="round" clip-path="url(#c2)"/>
<text class="s" x="1200 1207.75 1215.5" y="701">ORS</text>
<path d="M1275 703L1324 703" fill="none" stroke="#424086" stroke-width="4.1667" stroke-linecap="square" stroke-linejoin="round" clip-path="url(#c2)"/>
<text class="s" x="1288 1295.625 1302.625" y="701">GEM</text>
<path d="M1113 687L1133 687" fill="none" stroke="#482475" stroke-width="4.1667" stroke-linecap="square" stroke-linejoin="round" clip-path="url(#c2)"/>
<text class="s" x="1111 1117 1125.125" y="684">KUM</text>
<path d="M75 842L75 792L75 741L75 691L75 641" fill="none" stroke="#ffffff" stroke-width="2.0833" stroke-opacity="0.3" stroke-dasharray="2.0833 3.4375" stroke-linejoin="round" clip-path="url(#c2)"/>
<path d="M219 842L219 792L219 741L219 691L219 641" fill="none" stroke="#ffffff" stroke-width="2.0833" stroke-opacity="0.3" stroke-dasharray="2.0833 3.4375" stroke-linejoin="round" clip-path="url(#c2)"/>
<path d="M365 842L365 792L365 741L365 691L365 641" fill="none" stroke="#ffffff" stroke-width="2.0833" stroke-opacity="0.3" stroke-dasharray="2.0833 3.4375" stroke-linejoin="round" clip-path="url(#c2)"/>
<path d="M506 842L506 792L506 741L506 691L506 641" fill="none" stroke="#ffffff" stroke-width="2.0833" stroke-opacity="0.3" stroke-dasharray="2.0833 3.4375" stroke-linejoin="round" clip-path="url(#c2)"/>
<path d="M651 842L651 792L651 741L651 691L651 641" fill="none" stroke="#ffffff" stroke-width="2.0833" stroke-opacity="0.3" stroke-dasharray="2.0833 3.4375" stroke-linejoin="round" clip-path="url(#c2)"/>
<path d="M797 842L797 792L797 741L797 691L797 641" fill="none" stroke="#ffffff" stroke-width="2.0833" stroke-opacity="0.3" stroke-dasharray="2.0833 3.4375" stroke-linejoin="round" clip-path="url(#c2)"/>
<path d="M940 842L940 792L940 741L940 691L940 641" fill="none" stroke="#ffffff" stroke-width="2.0833" stroke-opacity="0.3" stroke-dasharray="2.0833 3.4375" stroke-linejoin="round" clip-path="url(#c2)"/>
<path d="M1091 842L1091 792L1091 741L1091 691L1091 641" fill="none" stroke="#ffffff" stroke-width="2.0833" stroke-opacity="0.3" stroke-dasharray="2.0833 3.4375" stroke-linejoin="round" clip-path="url(#c2)"/>
<path d="M1239 842L1239 792L1239 741L1239 691L1239 641" fill="none" stroke="#ffffff" stroke-width="2.0833" stroke-opacity="0.3" stroke-dasharray="2.0833 3.4375" stroke-linejoin="round" clip-path="url(#c2)"/>
<path d="M1394 842L1394 792L1394 741L1394 691L1394 641" fill="none" stroke="#ffffff" stroke-width="2.0833" stroke-opacity="0.3" stroke-dasharray="2.0833 3.4375" stroke-linejoin="round" clip-path="url(#c2)"/>
<path d="M1548 842L1548 792L1548 741L1548 691L1548 641" fill="none" stroke="#ffffff" stroke-width="2.0833" stroke-opacity="0.3" stroke-dasharray="2.0833 3.4375" stroke-linejoin="round" clip-path="url(#c2)"/>
<path d="M1687 842L1687 792L1687 741L1687 691L1687 641" fill="none" stroke="#ffffff" stroke-width="2.0833" stroke-opacity="0.3" stroke-dasharray="2.0833 3.4375" stroke-linejoin="round" clip-path="url(#c2)"/>
<path d="M114 834L122 834M118 838L118 830" fill="#ffffff" stroke="#ffffff" stroke-width="2.0833" stroke-linejoin="round" clip-path="url(#c2)"/>
<path d="M241 834L249 834M245 838L245 830" fill="#ffffff" stroke="#ffffff" stroke-width="2.0833" stroke-linejoin="round" clip-path="url(#c2)"/>
<path d="M511 834L519 834M515 838L515 830" fill="#ffffff" stroke="#ffffff" stroke-width="2.0833" stroke-linejoin="round" clip-path="url(#c2)"/>
<path d="M707 834L715 834M711 838L711 830" fill="#ffffff" stroke="#ffffff" stroke-width="2.0833" stroke-linejoin="round" clip-path="url(#c2)"/>
<path d="M834 834L842 834M838 838L838 830" fill="#ffffff" stroke="#ffffff" stroke-width="2.0833" stroke-linejoin="round" clip-path="url(#c2)"/>
<path d="M962 834L970 834M966 838L966 830" fill="#ffffff" stroke="#ffffff" stroke-width="2.0833" stroke-linejoin="round" clip-path="url(#c2)"/>
<path d="M987 834L995 834M991 838L991 830" fill="#ffffff" stroke="#ffffff" stroke-width="2.0833" stroke-linejoin="round" clip-path="url(#c2)"/>
<path d="M1117 834L1125 834M1121 838L1121 830" fill="#ffffff" stroke="#ffffff" stroke-width="2.0833" stroke-linejoin="round" clip-path="url(#c2)"/>
<path d="M1296 834L1304 834M1300 838L1300 830" fill="#ffffff" stroke="#ffffff" stroke-width="2.0833" stroke-linejoin="round" clip-path="url(#c2)"/>
<path d="M1342 834L1350 834M1346 838L1346 830" fill="#ffffff" stroke="#ffffff" stroke-width="2.0833" stroke-linejoin="round" clip-path="url(#c2)"/>
<path d="M1413 834L1421 834M1417 838L1417 830" fill="#ffffff" stroke="#ffffff" stroke-width="2.0833" stroke-linejoin="round" clip-path="url(#c2)"/>
<path d="M1482 834L1490 834M1486 838L1486 830" fill="#ffffff" stroke="#ffffff" stroke-width="2.0833" stroke-linejoin="round" clip-path="url(#c2)"/>
<path d="M1531 834L1539 834M1535 838L1535 830" fill="#ffffff" stroke="#ffffff" stroke-width="2.0833" stroke-linejoin="round" clip-path="url(#c2)"/>
<path d="M1732 834L1740 834M1736 838L1736 830" fill="#ffffff" stroke="#ffffff" stroke-width="2.0833" stroke-linejoin="round" clip-path="url(#c2)"/>
<path d="M1766 834L1774 834M1770 838L1770 830" fill="#ffffff" stroke="#ffffff" stroke-width="2.0833" stroke-linejoin="round" clip-path="url(#c2)"/>
<path d="M173 818L181 818M177 822L177 814" fill="#ffffff" stroke="#ffffff" stroke-width="2.0833" stroke-linejoin="round" clip-path="url(#c2)"/>
<path d="M256 818L264 818M260 822L260 814" fill="#ffffff" stroke="#ffffff" stroke-width="2.0833" stroke-linejoin="round" clip-path="url(#c2)"/>
<path d="M324 818L332 818M328 822L328 814" fill="#ffffff" stroke="#ffffff" stroke-width="2.0833" stroke-linejoin="round" clip-path="url(#c2)"/>
<path d="M438 818L446 818M442 822L442 814" fill="#ffffff" stroke="#ffffff" stroke-width="2.0833" stroke-linejoin="round" clip-path="url(#c2)"/>
<path d="M599 818L607 818M603 822L603 814" fill="#ffffff" stroke="#ffffff" stroke-width="2.0833" stroke-linejoin="round" clip-path="url(#c2)"/>
<path d="M717 818L725 818M721 822L721 814" fill="#ffffff" stroke="#ffffff" stroke-width="2.0833" stroke-linejoin="round" clip-path="url(#c2)"/>
<path d="M794 818L802 818M798 822L798 814" fill="#ffffff" stroke="#ffffff" stroke-width="2.0833" stroke-linejoin="round" clip-path="url(#c2)"/>
<path d="M940 818L948 818M944 822L944 814" fill="#ffffff" stroke="#ffffff" stroke-width="2.0833" stroke-linejoin="round" clip-path="url(#c2)"/>
<path d="M1006 818L1014 818M1010 822L1010 814" fill="#ffffff" stroke="#ffffff" stroke-width="2.0833" stroke-linejoin="round" clip-path="url(#c2)"/>
<path d="M1153 818L1161 818M1157 822L1157 814" fill="#ffffff" stroke="#ffffff" stroke-width="2.0833" stroke-linejoin="round" clip-path="url(#c2)"/>
<path d="M1251 818L1259 818M1255 822L1255 814" fill="#ffffff" stroke="#ffffff" stroke-width="2.0833" stroke-linejoin="round" clip-path="url(#c2)"/>
<path d="M1300 818L1308 818M1304 822L1304 814" fill="#ffffff" stroke="#ffffff" stroke-width="2.0833" stroke-linejoin="round" clip-path="url(#c2)"/>
<path d="M1350 818L1358 818M1354 822L1354 814" fill="#ffffff" stroke="#ffffff" stroke-width="2.0833" stroke-linejoin="round" clip-path="url(#c2)"/>
<path d="M1403 818L1411 818M1407 822L1407 814" fill="#ffffff" stroke="#ffffff" stroke-width="2.0833" stroke-linejoin="round" clip-path="url(#c2)"/>
<path d="M1467 818L1475 818M1471 822L1471 814" fill="#ffffff" stroke="#ffffff" stroke-width="2.0833" stroke-linejoin="round" clip-path="url(#c2)"/>
<path d="M1555 818L1563 818M1559 822L1559 814" fill="#ffffff" stroke="#ffffff" stroke-width="2.0833" stroke-linejoin="round" clip-path="url(#c2)"/>
<path d="M175 802L183 802M179 806L179 798" fill="#ffffff" stroke="#ffffff" stroke-width="2.0833" stroke-linejoin="round" clip-path="url(#c2)"/>
<path d="M379 802L387 802M383 806L383 798" fill="#ffffff" stroke="#ffffff" stroke-width="2.0833" stroke-linejoin="round" clip-path="url(#c2)"/>
<path d="M545 802L553 802M549 806L549 798" fill="#ffffff" stroke="#ffffff" stroke-width="2.0833" stroke-linejoin="round" clip-path="url(#c2)"/>
<path d="M683 802L691 802M687 806L687 798" fill="#ffffff" stroke="#ffffff" stroke-width="2.0833" stroke-linejoin="round" clip-path="url(#c2)"/>
<path d="M742 802L750 802M746 806L746 798" fill="#ffffff" stroke="#ffffff" stroke-width="2.0833" stroke-linejoin="round" clip-path="url(#c2)"/>
<path d="M1075 802L1083 802M1079 806L1079 798" fill="#ffffff" stroke="#ffffff" stroke-width="2.0833" stroke-linejoin="round" clip-path="url(#c2)"/>
<path d="M1217 802L1225 802M1221 806L1221 798" fill="#ffffff" stroke="#ffffff" stroke-width="2.0833" stroke-linejoin="round" clip-path="url(#c2)"/>
<path d="M1305 802L1313 802M1309 806L1309 798" fill="#ffffff" stroke="#ffffff" stroke-width="2.0833" stroke-linejoin="round" clip-path="url(#c2)"/>
<path d="M1467 802L1475 802M1471 806L1471 798" fill="#ffffff" stroke="#ffffff" stroke-width="2.0833" stroke-linejoin="round" clip-path="url(#c2)"/>
<path d="M1560 802L1568 802M1564 806L1564 798" fill="#ffffff" stroke="#ffffff" stroke-width="2.0833" stroke-linejoin="round" clip-path="url(#c2)"/>
<path d="M202 785L210 785M206 789L206 781" fill="#ffffff" stroke="#ffffff" stroke-width="2.0833" stroke-linejoin="round" clip-path="url(#c2)"/>
<path d="M401 785L409 785M405 789L405 781" fill="#ffffff" stroke="#ffffff" stroke-width="2.0833" stroke-linejoin="round" clip-path="url(#c2)"/>
<path d="M526 785L534 785M530 789L530 781" fill="#ffffff" stroke="#ffffff" stroke-width="2.0833" stroke-linejoin="round" clip-path="url(#c2)"/>
<path d="M639 785L647 785M643 789L643 781" fill="#ffffff" stroke="#ffffff" stroke-width="2.0833" stroke-linejoin="round" clip-path="url(#c2)"/>
<path d="M815 785L823 785M819 789L819 781" fill="#ffffff" stroke="#ffffff" stroke-width="2.0833" stroke-linejoin="round" clip-path="url(#c2)"/>
<path d="M960 785L968 785M964 789L964 781" fill="#ffffff" stroke="#ffffff" stroke-width="2.0833" stroke-linejoin="round" clip-path="url(#c2)"/>
<path d="M1041 785L1049 785M1045 789L1045 781" fill="#ffffff" stroke="#ffffff" stroke-width="2.0833" stroke-linejoin="round" clip-path="url(#c2)"/>
<path d="M1188 785L1196 785M1192 789L1192 781" fill="#ffffff" stroke="#ffffff" stroke-width="2.0833" stroke-linejoin="round" clip-path="url(#c2)"/>
<path d="M1251 785L1259 785M1255 789L1255 781" fill="#ffffff" stroke="#ffffff" stroke-width="2.0833" stroke-linejoin="round" clip-path="url(#c2)"/>
<path d="M1325 785L1333 785M1329 789L1329 781" fill="#ffffff" stroke="#ffffff" stroke-width="2.0833" stroke-linejoin="round" clip-path="url(#c2)"/>
<path d="M1403 785L1411 785M1407 789L1407 781" fill="#ffffff" stroke="#ffffff" stroke-width="2.0833" stroke-linejoin="round" clip-path="url(#c2)"/>
<path d="M1546 785L1554 785M1550 789L1550 781" fill="#ffffff" stroke="#ffffff" stroke-width="2.0833" stroke-linejoin="round" clip-path="url(#c2)"/>
<path d="M356 769L364 769M360 773L360 765" fill="#ffffff" stroke="#ffffff" stroke-width="2.0833" stroke-linejoin="round" clip-path="url(#c2)"/>
<path d="M427 769L435 769M431 773L431 765" fill="#ffffff" stroke="#ffffff" stroke-width="2.0833" stroke-linejoin="round" clip-path="url(#c2)"/>
<path d="M477 769L485 769M481 773L481 765" fill="#ffffff" stroke="#ffffff" stroke-width="2.0833" stroke-linejoin="round" clip-path="url(#c2)"/>
<path d="M536 769L544 769M540 773L540 765" fill="#ffffff" stroke="#ffffff" stroke-width="2.0833" stroke-linejoin="round" clip-path="url(#c2)"/>
<path d="M571 769L579 769M575 773L575 765" fill="#ffffff" stroke="#ffffff" stroke-width="2.0833" stroke-linejoin="round" clip-path="url(#c2)"/>
<path d="M631 769L639 769M635 773L635 765" fill="#ffffff" stroke="#ffffff" stroke-width="2.0833" stroke-linejoin="round" clip-path="url(#c2)"/>
<path d="M974 769L982 769M978 773L978 765" fill="#ffffff" stroke="#ffffff" stroke-width="2.0833" stroke-linejoin="round" clip-path="url(#c2)"/>
<path d="M1070 769L1078 769M1074 773L1074 765" fill="#ffffff" stroke="#ffffff" stroke-width="2.0833" stroke-linejoin="round" clip-path="url(#c2)"/>
<path d="M1109 769L1117 769M1113 773L1113 765" fill="#ffffff" stroke="#ffffff" stroke-width="2.0833" stroke-linejoin="round" clip-path="url(#c2)"/>
<path d="M1178 769L1186 769M1182 773L1182 765" fill="#ffffff" stroke="#ffffff" stroke-width="2.0833" stroke-linejoin="round" clip-path="url(#c2)"/>
<path d="M1256 769L1264 769M1260 773L1260 765" fill="#ffffff" stroke="#ffffff" stroke-width="2.0833" stroke-linejoin="round" clip-path="url(#c2)"/>
<path d="M1467 769L1475 769M1471 773L1471 765" fill="#ffffff" stroke="#ffffff" stroke-width="2.0833" stroke-linejoin="round" clip-path="url(#c2)"/>
<path d="M428 752L436 752M432 756L432 748" fill="#ffffff" stroke="#ffffff" stroke-width="2.0833" stroke-linejoin="round" clip-path="url(#c2)"/>
<path d="M540 752L548 752M544 756L544 748" fill="#ffffff" stroke="#ffffff" stroke-width="2.0833" stroke-linejoin="round" clip-path="url(#c2)"/>
<path d="M575 752L583 752M579 756L579 748" fill="#ffffff" stroke="#ffffff" stroke-width="2.0833" stroke-linejoin="round" clip-path="url(#c2)"/>
<path d="M704 752L712 752M708 756L708 748" fill="#ffffff" stroke="#ffffff" stroke-width="2.0833" stroke-linejoin="round" clip-path="url(#c2)"/>
<path d="M1095 752L1103 752M1099 756L1099 748" fill="#ffffff" stroke="#ffffff" stroke-width="2.0833" stroke-linejoin="round" clip-path="url(#c2)"/>
<path d="M1271 752L1279 752M1275 756L1275 748" fill="#ffffff" stroke="#ffffff" stroke-width="2.0833" stroke-linejoin="round" clip-path="url(#c2)"/>
<path d="M1477 752L1485 752M1481 756L1481 748" fill="#ffffff" stroke="#ffffff" stroke-width="2.0833" stroke-linejoin="round" clip-path="url(#c2)"/>
<path d="M438 736L446 736M442 740L442 732" fill="#ffffff" stroke="#ffffff" stroke-width="2.0833" stroke-linejoin="round" clip-path="url(#c2)"/>
<path d="M631 736L639 736M635 740L635 732" fill="#ffffff" stroke="#ffffff" stroke-width="2.0833" stroke-linejoin="round" clip-path="url(#c2)"/>
<path d="M1039 736L1047 736M1043 740L1043 732" fill="#ffffff" stroke="#ffffff" stroke-width="2.0833" stroke-linejoin="round" clip-path="url(#c2)"/>
<path d="M1168 736L1176 736M1172 740L1172 732" fill="#ffffff" stroke="#ffffff" stroke-width="2.0833" stroke-linejoin="round" clip-path="url(#c2)"/>
<path d="M1275 736L1283 736M1279 740L1279 732" fill="#ffffff" stroke="#ffffff" stroke-width="2.0833" stroke-linejoin="round" clip-path="url(#c2)"/>
<path d="M1497 736L1505 736M1501 740L1501 732" fill="#ffffff" stroke="#ffffff" stroke-width="2.0833" stroke-linejoin="round" clip-path="url(#c2)"/>
<path d="M599 720L607 720M603 724L603 716" fill="#ffffff" stroke="#ffffff" stroke-width="2.0833" stroke-linejoin="round" clip-path="url(#c2)"/>
<path d="M727 720L735 720M731 724L731 716" fill="#ffffff" stroke="#ffffff" stroke-width="2.0833" stroke-linejoin="round" clip-path="url(#c2)"/>
<path d="M1188 720L1196 720M1192 724L1192 716" fill="#ffffff" stroke="#ffffff" stroke-width="2.0833" stroke-linejoin="round" clip-path="url(#c2)"/>
<path d="M1271 720L1279 720M1275 724L1275 716" fill="#ffffff" stroke="#ffffff" stroke-width="2.0833" stroke-linejoin="round" clip-path="url(#c2)"/>
<path d="M688 703L696 703M692 707L692 699" fill="#ffffff" stroke="#ffffff" stroke-width="2.0833" stroke-linejoin="round" clip-path="url(#c2)"/>
<path d="M1102 703L1110 703M1106 707L1106 699" fill="#ffffff" stroke="#ffffff" stroke-width="2.0833" stroke-linejoin="round" clip-path="url(#c2)"/>
<path d="M1207 703L1215 703M1211 707L1211 699" fill="#ffffff" stroke="#ffffff" stroke-width="2.0833" stroke-linejoin="round" clip-path="url(#c2)"/>
<path d="M1300 703L1308 703M1304 707L1304 699" fill="#ffffff" stroke="#ffffff" stroke-width="2.0833" stroke-linejoin="round" clip-path="url(#c2)"/>
<path d="M1119 687L1127 687M1123 691L1123 683" fill="#ffffff" stroke="#ffffff" stroke-width="2.0833" stroke-linejoin="round" clip-path="url(#c2)"/>
</svg>
</body>
</html>
